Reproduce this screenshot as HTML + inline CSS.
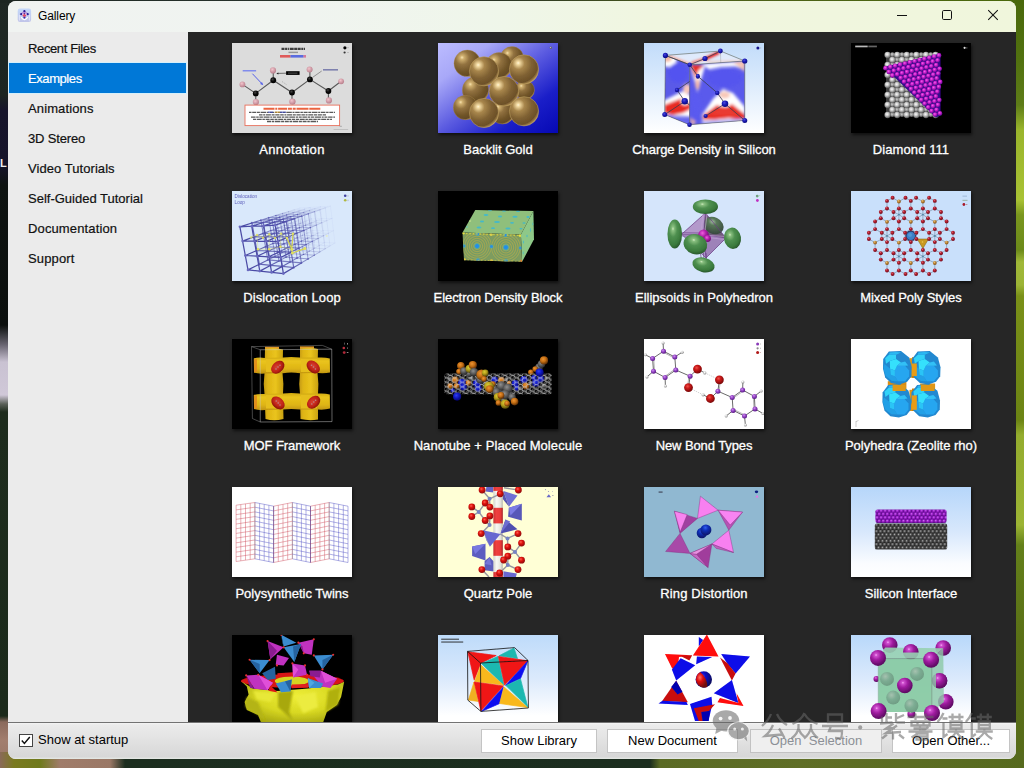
<!DOCTYPE html>
<html>
<head>
<meta charset="utf-8">
<title>Gallery</title>
<style>
*{box-sizing:border-box;margin:0;padding:0}
html,body{width:1024px;height:768px;overflow:hidden}
body{font-family:"Liberation Sans",sans-serif;position:relative;background:#1c2e1f}
.abs{position:absolute}
/* desktop pieces */
#dl{left:0;top:0;width:12px;height:768px;background:linear-gradient(180deg,#1f2824 0,#1c2521 95px,#17152b 110px,#16142a 165px,#0e1311 185px,#0b0f0d 325px,#6a6672 345px,#c9c2d2 362px,#d0c8d8 395px,#5a6058 404px,#1e2c1d 412px,#1b2a1b 716px,#8a6a5c 722px,#a27e6e 740px,#9a7868 758px,#7c7c22 762px,#74781e 768px)}
#dr{left:1010px;top:0;width:14px;height:768px;background:linear-gradient(180deg,#4a690b 0,#527210 60px,#5e7c18 105px,#9ab52c 130px,#a9c234 200px,#7a961e 215px,#6c8a1a 250px,#a0b838 262px,#9cb436 285px,#7a9018 296px,#6c8414 420px,#94ac2e 435px,#9cb434 525px,#64801a 545px,#5a7016 640px,#566a1a 768px)}
#db{left:0;top:752px;width:1024px;height:16px;background:linear-gradient(90deg,#8a6a58 0,#7a7a20 14px,#6f7a1c 40px,#a07c6a 60px,#9a7866 110px,#1c2e1f 125px,#1b2d1e 650px,#5a6a24 660px,#5f6e26 800px,#566a1e 1024px)}
#dt{left:0;top:0;width:1024px;height:3px;background:linear-gradient(90deg,#1d2622 0,#25302a 200px,#2a3424 500px,#4d5f1a 700px,#4a690b 1024px)}
/* window */
#win{left:8px;top:1px;width:1008px;height:758px;border-radius:8px;overflow:hidden;background:#ebebeb}
#tb{left:0;top:0;width:1008px;height:31px;background:linear-gradient(90deg,#f0f3f1 0,#f0f4f0 300px,#eff6ea 480px,#f0f6e0 640px,#f0f6dc 1008px)}
#ttl{left:30px;top:8px;font-size:12px;line-height:14px;color:#000}
#side{left:0;top:31px;width:179px;height:690px;background:#ebebeb}
#sel{left:1px;top:62px;width:177px;height:30px;background:#0078d7;box-shadow:0 0 0 1px rgba(205,240,255,.75)}
.si{left:20px;font-size:13px;line-height:16px;color:#111;white-space:nowrap;-webkit-text-stroke:.2px currentColor}
#main{left:180px;top:31px;width:828px;height:690px;background:#262626;overflow:hidden}
.th{width:120px;height:90px;box-shadow:1px 2px 3px rgba(0,0,0,.6);overflow:hidden}
.th svg{display:block}
.lb{width:206px;text-align:center;font-size:13px;line-height:16px;color:#fff;white-space:nowrap;-webkit-text-stroke:.3px #fff}
#bot{left:0;top:721px;width:1008px;height:37px;background:linear-gradient(180deg,#f4f4f4 0,#ebebeb 2px,#e6e6e6 30%,#d7d7d7 94%,#e6eae6 100%);border-top:1px solid #737373}
.btn{top:6px;height:24px;background:#fff;border:1px solid #c4c4c4;font-size:13px;line-height:22px;text-align:center;color:#000;white-space:nowrap}
</style>
</head>
<body>
<div id="dl" class="abs"></div>
<div id="dr" class="abs"></div>
<div id="dL" class="abs" style="left:0;top:158px;font-size:11px;font-weight:bold;line-height:11px;color:#eee">L</div>
<div id="db" class="abs"></div>
<div id="dt" class="abs"></div>
<div id="win" class="abs">
  <div id="tb" class="abs"></div>
  <svg class="abs" style="left:9px;top:7px" width="15" height="15" viewBox="0 0 15 15"><defs><filter id="icb"><feGaussianBlur stdDeviation=".45"/></filter><linearGradient id="icg" x1="0" y1="0" x2="0" y2="1"><stop offset="0" stop-color="#c4d8fa"/><stop offset="1" stop-color="#c0c4e8"/></linearGradient></defs><g filter="url(#icb)"><rect x=".7" y=".5" width="13.4" height="13.6" rx="2.4" fill="url(#icg)"/><path d="M7.4 2.2L11.2 5.6L7.4 9.4L3.6 5.6z" fill="#b890d8"/><path d="M3.6 9.6Q7.4 14.8 11.2 9.6L10.4 8.8Q7.4 12.6 4.4 8.8z" fill="#fff"/><path d="M2.4 7V12.6M12.4 7V12.6" stroke="#eef" stroke-width="1" opacity=".7"/><circle cx="7.4" cy="3.2" r="1.1" fill="#2a1c98"/><circle cx="4.2" cy="6.2" r="1.1" fill="#2a1c98"/><circle cx="10.7" cy="6.2" r="1.1" fill="#2a1c98"/><circle cx="7.4" cy="9.6" r="1.1" fill="#3a2ca8"/><circle cx="7.4" cy="7.2" r="1.6" fill="#e04868"/><circle cx="5.9" cy="6.2" r=".6" fill="#fff"/><circle cx="8.9" cy="6.2" r=".6" fill="#fff"/><circle cx="7.4" cy="5.6" r=".7" fill="#4a2ca0"/></g></svg>
  <div id="ttl" class="abs" style="top:8px;letter-spacing:-0.11px">Gallery</div>
  <svg class="abs" style="left:880px;top:0" width="128" height="31" viewBox="0 0 128 31"><g stroke="#111" stroke-width="1" fill="none"><path d="M9 14.5H19"/><rect x="54.5" y="9.5" width="9" height="9" rx="1.2"/><path d="M100.2 9.2L109.8 18.8M109.8 9.2L100.2 18.8" stroke-width="1.05"/></g></svg>
  <div id="side" class="abs"></div>
  <div id="sel" class="abs"></div>
  <div class="abs si" style="top:40px;letter-spacing:-0.37px">Recent Files</div>
  <div class="abs si" style="top:70px;color:#fff;letter-spacing:-0.42px">Examples</div>
  <div class="abs si" style="top:100px;letter-spacing:0.12px">Animations</div>
  <div class="abs si" style="top:130px;letter-spacing:-0.16px">3D Stereo</div>
  <div class="abs si" style="top:160px;letter-spacing:0.06px">Video Tutorials</div>
  <div class="abs si" style="top:190px">Self-Guided Tutorial</div>
  <div class="abs si" style="top:220px;letter-spacing:0.13px">Documentation</div>
  <div class="abs si" style="top:250px;letter-spacing:0.14px">Support</div>
  <div id="main" class="abs">
    <div class="abs th" style="left:44px;top:11px"><svg width="120" height="90" viewBox="0 0 120 90"><defs><radialGradient id="a1p" cx="40%" cy="35%" r="65%"><stop offset="0" stop-color="#f2c4cc"/><stop offset="1" stop-color="#b87f8c"/></radialGradient><radialGradient id="a1k" cx="40%" cy="35%" r="65%"><stop offset="0" stop-color="#444"/><stop offset=".5" stop-color="#0a0a0a"/><stop offset="1" stop-color="#000"/></radialGradient></defs><rect width="120" height="90" fill="#dcdcdc"/><g stroke="#5a5a5a" stroke-width="1.1" stroke-linecap="round" fill="none"><path d="M10.4 41.4L23.75 50.4L41.25 37.25L60 49.5L77.9 36.4L96.4 48L109.1 38.25"/><path d="M23.75 50.4V59M41.25 37.25V27.4M60 49.5V58.5M77.9 36.4V26.6M96.4 48V57.2"/></g><g fill="url(#a1p)"><circle cx="10.4" cy="41.4" r="2.9"/><circle cx="23.9" cy="59.1" r="3.1"/><circle cx="41" cy="27.4" r="3.1"/><circle cx="60.4" cy="58.6" r="3.2"/><circle cx="77.6" cy="26.6" r="3"/><circle cx="96.9" cy="57.4" r="3.1"/><circle cx="109.1" cy="38.3" r="2.9"/></g><g fill="url(#a1k)"><circle cx="23.75" cy="50.4" r="2.9"/><circle cx="41.25" cy="37.25" r="2.9"/><circle cx="60" cy="49.5" r="2.9"/><circle cx="77.9" cy="36.4" r="2.9"/><circle cx="96.4" cy="48" r="2.9"/></g><!-- title --><path d="M49.5 5.9H73" stroke="#222" stroke-width="2.3" stroke-dasharray="3 .6 2 .6 1.2 .8 4 .5 3 .5" opacity=".85"/><rect x="56.5" y="8.7" width="9.5" height="1.4" fill="#666" opacity=".6"/><rect x="48" y="12" width="10.5" height="2.6" fill="#e03a3a" opacity=".8"/><rect x="58.5" y="12" width="13" height="2.6" fill="#3a4fe0" opacity=".8"/><rect x="71.5" y="12" width="2.5" height="2.6" fill="#d05080" opacity=".7"/><!-- legend --><circle cx="112.9" cy="4.8" r="1.6" fill="#000"/><circle cx="112.6" cy="9.5" r="1.1" fill="#333"/><rect x="115" y="4.3" width="2" height=".8" fill="#999" opacity=".6"/><rect x="115" y="9.1" width="2" height=".8" fill="#999" opacity=".6"/><!-- black label + arrow --><rect x="54.1" y="28.2" width="13.5" height="3.7" fill="#000"/><rect x="56" y="29.6" width="9.5" height="1" fill="#777" opacity=".7"/><path d="M54 30.2L45.5 30.4" stroke="#222" stroke-width=".6"/><path d="M44.4 30.4l2-1v2z" fill="#222"/><!-- blue thick arrow --><rect x="10.7" y="27" width="13.4" height="1.5" fill="#6a78f0" opacity=".8"/><path d="M20.4 30.7L30 40.8" stroke="#5560e8" stroke-width="1"/><path d="M31.3 42.3l-3.2-1.4 1.9-1.8z" fill="#5560e8"/><!-- carbon atom --><rect x="91" y="26" width="15" height="1.6" fill="#555a9a" opacity=".7"/><path d="M89.7 28L80.6 34.4" stroke="#444" stroke-width=".5"/><!-- dotted --><path d="M50 38.5l5 3.5" stroke="#777" stroke-width=".5" stroke-dasharray="1 1.2"/><!-- box --><rect x="13" y="62.1" width="94.6" height="20.5" fill="#fff" stroke="#e8705c" stroke-width=".9"/><path d="M31.5 65.8H88.5" stroke="#e8481e" stroke-width="1.9" stroke-dasharray="11 .8 2 .8 9 .8 4 .8 3 .8 12 .8" opacity=".85"/><g stroke="#1a1a1a" stroke-width="1.25" opacity=".72" fill="none"><path d="M17 69.3H103" stroke-dasharray="2.5 .7 4 .7 3 .7 5.5 .7 2 .7 4.5 .7"/><path d="M27 71.8H94" stroke-dasharray="3.5 .7 2 .7 5 .7 3 .7 4.2 .7"/><path d="M19 74.1H103" stroke-dasharray="4.5 .7 2.5 .7 3.5 .7 6 .7 2 .7 3 .7"/><path d="M21 76.4H100" stroke-dasharray="3 .7 5 .7 2.5 .7 4 .7 3.5 .7"/><path d="M35 78.5H86" stroke-dasharray="4 .7 2.5 .7 5.5 .7 3 .7" stroke-width="1.4"/></g><rect x="36" y="68.6" width="5" height="1.2" fill="#2a3ad0" opacity=".6"/><rect x="43" y="68.6" width="5" height="1.2" fill="#e0a020" opacity=".7"/><rect x="48" y="68.6" width="6" height="1.2" fill="#2a3ad0" opacity=".6"/><rect x="101.6" y="86.2" width="14.5" height=".6" fill="#999" opacity=".7"/><rect x="107.5" y="82.8" width="2.4" height="1" fill="#888" opacity=".6"/></svg></div>
<div class="abs lb" style="left:1px;top:110px;letter-spacing:0.33px">Annotation</div>
<div class="abs th" style="left:250px;top:11px"><svg width="120" height="90" viewBox="0 0 120 90"><defs><linearGradient id="b2g" x1="0" y1="0" x2="1" y2="1"><stop offset="0" stop-color="#bcbcff"/><stop offset=".22" stop-color="#a8a8f8"/><stop offset=".5" stop-color="#5a5ae0"/><stop offset=".75" stop-color="#1a1ec8"/><stop offset="1" stop-color="#0608b4"/></linearGradient><radialGradient id="b2s" cx="34%" cy="32%" r="74%" fx="30%" fy="28%"><stop offset="0" stop-color="#fff6d8"/><stop offset=".07" stop-color="#f4dca4"/><stop offset=".28" stop-color="#a8864c"/><stop offset=".6" stop-color="#7e6032"/><stop offset=".86" stop-color="#6c5028"/><stop offset=".95" stop-color="#a08048"/><stop offset="1" stop-color="#c8a868"/></radialGradient><radialGradient id="b2d" cx="34%" cy="32%" r="74%" fx="30%" fy="28%"><stop offset="0" stop-color="#f8e4b0"/><stop offset=".1" stop-color="#d0b070"/><stop offset=".35" stop-color="#927240"/><stop offset=".7" stop-color="#705428"/><stop offset=".9" stop-color="#644a24"/><stop offset="1" stop-color="#b09050"/></radialGradient></defs><rect width="120" height="90" fill="url(#b2g)"/><filter id="b2f"><feGaussianBlur stdDeviation=".35"/></filter><g filter="url(#b2f)"><g fill="url(#b2d)" stroke="#b09050" stroke-width=".6" stroke-opacity=".6"><circle cx="74" cy="15" r="11.5"/><circle cx="29.3" cy="20.3" r="13.3"/><circle cx="61" cy="22.5" r="13"/><circle cx="87" cy="47" r="9.5"/><circle cx="37.5" cy="47" r="13.2"/><circle cx="27.5" cy="64.5" r="12.2"/><circle cx="64.5" cy="69" r="12"/></g><g fill="url(#b2s)" stroke="#c4a464" stroke-width=".7" stroke-opacity=".75"><circle cx="46" cy="28.3" r="14.6"/><circle cx="86" cy="26.4" r="14.6"/><circle cx="66" cy="48.3" r="14.8"/><circle cx="46" cy="70" r="14.6"/><circle cx="86" cy="68.3" r="14.6"/></g></g><circle cx="112.9" cy="4.8" r="1.3" fill="#667"/><circle cx="112.5" cy="4.4" r=".5" fill="#ccd"/></svg></div>
<div class="abs lb" style="left:207px;top:110px">Backlit Gold</div>
<div class="abs th" style="left:456px;top:11px"><svg width="120" height="90" viewBox="0 0 120 90"><defs><linearGradient id="c3g" x1="0" y1="0" x2="0" y2="1"><stop offset="0" stop-color="#c2dcfa"/><stop offset=".45" stop-color="#dcebfc"/><stop offset="1" stop-color="#fff"/></linearGradient><radialGradient id="c3a" cx="40%" cy="35%" r="65%"><stop offset="0" stop-color="#4a4ae0"/><stop offset=".5" stop-color="#1a1ab4"/><stop offset="1" stop-color="#0c0c80"/></radialGradient><filter id="c3b" x="-20%" y="-20%" width="140%" height="140%"><feGaussianBlur stdDeviation="1.6"/></filter><filter id="c3b2" x="-20%" y="-20%" width="140%" height="140%"><feGaussianBlur stdDeviation="1"/></filter><clipPath id="c3L"><path d="M20.4 12.4L44.75 21.75L44.5 81.75L19.75 71.6z"/></clipPath><clipPath id="c3R"><path d="M44.75 21.75L99.75 18L99.75 77.4L44.5 81.75z"/></clipPath><clipPath id="c3T"><path d="M20.4 12.4L75.4 8L99.75 18L44.75 21.75z"/></clipPath></defs><rect width="120" height="90" fill="url(#c3g)"/><g transform="translate(1 0)"><!-- top face --><g clip-path="url(#c3T)"><g filter="url(#c3b2)"><path d="M20 12L75 8L100 18L45 22z" fill="#e8eefc" opacity=".7"/><path d="M24 13.5L44 21" stroke="#f4b0a0" stroke-width="3"/><path d="M60 16L74 9.5" stroke="#e82020" stroke-width="4"/><path d="M46 20L60 15.5" stroke="#f08070" stroke-width="2.5"/><path d="M62 19L98 18" stroke="#f0d0c8" stroke-width="2"/></g></g><!-- left face --><g clip-path="url(#c3L)"><rect x="15" y="8" width="35" height="80" fill="#5a5ae8"/><g filter="url(#c3b)"><ellipse cx="23" cy="16" rx="9" ry="8" fill="#fff"/><ellipse cx="22" cy="15" rx="5" ry="4" fill="#f4b8a0"/><ellipse cx="33" cy="30" rx="10" ry="10" fill="#5252f0"/><path d="M18 58L38 48L48 54L48 74L18 72z" fill="#fff"/><path d="M19 62L40 54L46 60L46 66L38 70L28 72L19 70z" fill="#e82a20"/><ellipse cx="40" cy="58" rx="4" ry="4" fill="#fff"/><path d="M22 74L44 80" stroke="#6a6af0" stroke-width="5"/><ellipse cx="42" cy="46" rx="4" ry="5" fill="#f8c8b8"/></g></g><!-- right face --><g clip-path="url(#c3R)"><rect x="44" y="15" width="58" height="70" fill="#5a5aec"/><g filter="url(#c3b)"><path d="M57 21L100 18L100 27L90 23.5L76 24L64 26.5z" fill="#fff"/><path d="M88 19L100 18L100 29L94 24z" fill="#f6c4b4"/><path d="M45 22L52.5 49L60 23z" fill="#fff"/><path d="M45.5 22L51 36L53 28L59 22.5z" fill="#ea2c20"/><ellipse cx="52.5" cy="41" rx="2.2" ry="5.5" fill="#f6b8a8"/><ellipse cx="80" cy="35" rx="17" ry="9" fill="#5454ee"/><path d="M57 72L68 56L78 46L88 50L100 64L100 79L58 81z" fill="#fff"/><ellipse cx="79.5" cy="52" rx="5.5" ry="3.6" fill="#f8c8b8"/><path d="M58 72.5L72 62L80 65.5L87 61L100 71.5L100 77L84 75L70 76.5L58 76.5z" fill="#e8261e"/><path d="M62 72L80 62L98 74z" fill="#ea3a30"/><ellipse cx="80" cy="60.5" rx="3.6" ry="3.4" fill="#fff"/><path d="M45.5 52L50 80L56.5 62L53 50z" fill="#5a5af0"/><path d="M44 74L47.5 82.5L51 79z" fill="#f4b4a4"/><path d="M56 79.5L99 76.5" stroke="#9a9af6" stroke-width="2.2"/></g></g><!-- cube edges --><g stroke="#55584a" stroke-width=".55" fill="none"><path d="M20.4 12.4L75.4 8L99.75 18L44.75 21.75z"/><path d="M20.4 12.4L19.75 71.6L44.5 81.75L99.75 77.4L99.75 18"/><path d="M44.75 21.75L44.5 81.75"/><path d="M75.4 8L75.8 20" opacity=".4"/></g><g stroke="#3a3c50" stroke-width=".8" fill="none"><path d="M44.75 21.75L52.9 33.25L72.25 49.9L80 60.75L99.75 77.4M80 60.75L60.6 73"/><path d="M44.6 38.5L32 47L39.75 58.25L19.75 71.6M39.75 58.25L44.5 62"/><path d="M20.4 12.4L44.75 21.75L60 15.5L75.4 8"/></g><g fill="url(#c3a)"><circle cx="20.4" cy="12.4" r="2.6"/><circle cx="75.4" cy="8" r="2.4"/><circle cx="99.75" cy="18" r="2.6"/><circle cx="44.75" cy="21.75" r="2.3"/><circle cx="60" cy="15.5" r="2.6"/><ellipse cx="52.9" cy="33.25" rx="2" ry="2.6"/><circle cx="32" cy="47" r="2.2"/><circle cx="39.75" cy="58.25" r="3.2"/><circle cx="72.25" cy="49.9" r="2.2"/><circle cx="80" cy="60.75" r="3.3"/><circle cx="60.6" cy="73" r="2.1"/><circle cx="19.75" cy="71.6" r="2.5"/><circle cx="44.5" cy="81.75" r="2.3"/><circle cx="99.75" cy="77.4" r="2.5"/></g><circle cx="112.9" cy="4.9" r="1.5" fill="#14148c"/><rect x="115.6" y="4.2" width=".5" height="1.5" fill="#99a"/></g></svg></div>
<div class="abs lb" style="left:413px;top:110px;letter-spacing:-0.07px">Charge Density in Silicon</div>
<div class="abs th" style="left:663px;top:11px"><svg width="120" height="90" viewBox="0 0 120 90"><defs><radialGradient id="d4w" cx="42%" cy="38%" r="62%"><stop offset="0" stop-color="#fafafa"/><stop offset=".4" stop-color="#cacaca"/><stop offset="1" stop-color="#585858"/></radialGradient><radialGradient id="d4g" cx="42%" cy="38%" r="62%"><stop offset="0" stop-color="#ccc"/><stop offset=".5" stop-color="#999"/><stop offset="1" stop-color="#555"/></radialGradient><radialGradient id="d4m" cx="42%" cy="36%" r="64%"><stop offset="0" stop-color="#f468f0"/><stop offset=".45" stop-color="#c81cc8"/><stop offset="1" stop-color="#5c0890"/></radialGradient><filter id="d4b"><feGaussianBlur stdDeviation=".4"/></filter><clipPath id="d4c"><path d="M31 24.2L90.5 9.5L91 73L86 76.5L82 73z"/></clipPath></defs><rect width="120" height="90" fill="#000"/><g filter="url(#d4b)"><rect x="35" y="13" width="53" height="59" fill="#404040"/><circle cx="41.4" cy="71.7" r="2.4" fill="url(#d4g)"/><circle cx="51.0" cy="71.7" r="2.4" fill="url(#d4g)"/><circle cx="60.6" cy="71.7" r="2.4" fill="url(#d4g)"/><circle cx="70.2" cy="71.7" r="2.4" fill="url(#d4g)"/><circle cx="79.8" cy="71.7" r="2.4" fill="url(#d4g)"/><circle cx="46.2" cy="66.7" r="2.4" fill="url(#d4g)"/><circle cx="55.8" cy="66.7" r="2.4" fill="url(#d4g)"/><circle cx="65.4" cy="66.7" r="2.4" fill="url(#d4g)"/><circle cx="75.0" cy="66.7" r="2.4" fill="url(#d4g)"/><circle cx="84.6" cy="66.7" r="2.4" fill="url(#d4g)"/><circle cx="41.4" cy="61.7" r="2.4" fill="url(#d4g)"/><circle cx="51.0" cy="61.7" r="2.4" fill="url(#d4g)"/><circle cx="60.6" cy="61.7" r="2.4" fill="url(#d4g)"/><circle cx="70.2" cy="61.7" r="2.4" fill="url(#d4g)"/><circle cx="79.8" cy="61.7" r="2.4" fill="url(#d4g)"/><circle cx="46.2" cy="56.7" r="2.4" fill="url(#d4g)"/><circle cx="55.8" cy="56.7" r="2.4" fill="url(#d4g)"/><circle cx="65.4" cy="56.7" r="2.4" fill="url(#d4g)"/><circle cx="75.0" cy="56.7" r="2.4" fill="url(#d4g)"/><circle cx="84.6" cy="56.7" r="2.4" fill="url(#d4g)"/><circle cx="41.4" cy="51.7" r="2.4" fill="url(#d4g)"/><circle cx="51.0" cy="51.7" r="2.4" fill="url(#d4g)"/><circle cx="60.6" cy="51.7" r="2.4" fill="url(#d4g)"/><circle cx="70.2" cy="51.7" r="2.4" fill="url(#d4g)"/><circle cx="79.8" cy="51.7" r="2.4" fill="url(#d4g)"/><circle cx="46.2" cy="46.7" r="2.4" fill="url(#d4g)"/><circle cx="55.8" cy="46.7" r="2.4" fill="url(#d4g)"/><circle cx="65.4" cy="46.7" r="2.4" fill="url(#d4g)"/><circle cx="75.0" cy="46.7" r="2.4" fill="url(#d4g)"/><circle cx="84.6" cy="46.7" r="2.4" fill="url(#d4g)"/><circle cx="41.4" cy="41.7" r="2.4" fill="url(#d4g)"/><circle cx="51.0" cy="41.7" r="2.4" fill="url(#d4g)"/><circle cx="60.6" cy="41.7" r="2.4" fill="url(#d4g)"/><circle cx="70.2" cy="41.7" r="2.4" fill="url(#d4g)"/><circle cx="79.8" cy="41.7" r="2.4" fill="url(#d4g)"/><circle cx="46.2" cy="36.7" r="2.4" fill="url(#d4g)"/><circle cx="55.8" cy="36.7" r="2.4" fill="url(#d4g)"/><circle cx="65.4" cy="36.7" r="2.4" fill="url(#d4g)"/><circle cx="75.0" cy="36.7" r="2.4" fill="url(#d4g)"/><circle cx="84.6" cy="36.7" r="2.4" fill="url(#d4g)"/><circle cx="41.4" cy="31.7" r="2.4" fill="url(#d4g)"/><circle cx="51.0" cy="31.7" r="2.4" fill="url(#d4g)"/><circle cx="60.6" cy="31.7" r="2.4" fill="url(#d4g)"/><circle cx="70.2" cy="31.7" r="2.4" fill="url(#d4g)"/><circle cx="79.8" cy="31.7" r="2.4" fill="url(#d4g)"/><circle cx="46.2" cy="26.7" r="2.4" fill="url(#d4g)"/><circle cx="55.8" cy="26.7" r="2.4" fill="url(#d4g)"/><circle cx="65.4" cy="26.7" r="2.4" fill="url(#d4g)"/><circle cx="75.0" cy="26.7" r="2.4" fill="url(#d4g)"/><circle cx="84.6" cy="26.7" r="2.4" fill="url(#d4g)"/><circle cx="41.4" cy="21.7" r="2.4" fill="url(#d4g)"/><circle cx="51.0" cy="21.7" r="2.4" fill="url(#d4g)"/><circle cx="60.6" cy="21.7" r="2.4" fill="url(#d4g)"/><circle cx="70.2" cy="21.7" r="2.4" fill="url(#d4g)"/><circle cx="79.8" cy="21.7" r="2.4" fill="url(#d4g)"/><circle cx="46.2" cy="16.7" r="2.4" fill="url(#d4g)"/><circle cx="55.8" cy="16.7" r="2.4" fill="url(#d4g)"/><circle cx="65.4" cy="16.7" r="2.4" fill="url(#d4g)"/><circle cx="75.0" cy="16.7" r="2.4" fill="url(#d4g)"/><circle cx="84.6" cy="16.7" r="2.4" fill="url(#d4g)"/><circle cx="41.4" cy="11.7" r="2.4" fill="url(#d4g)"/><circle cx="51.0" cy="11.7" r="2.4" fill="url(#d4g)"/><circle cx="60.6" cy="11.7" r="2.4" fill="url(#d4g)"/><circle cx="70.2" cy="11.7" r="2.4" fill="url(#d4g)"/><circle cx="79.8" cy="11.7" r="2.4" fill="url(#d4g)"/><circle cx="36.6" cy="72.0" r="3.15" fill="url(#d4w)"/><circle cx="46.2" cy="72.0" r="3.15" fill="url(#d4w)"/><circle cx="55.8" cy="72.0" r="3.15" fill="url(#d4w)"/><circle cx="65.4" cy="72.0" r="3.15" fill="url(#d4w)"/><circle cx="75.0" cy="72.0" r="3.15" fill="url(#d4w)"/><circle cx="84.6" cy="72.0" r="3.15" fill="url(#d4w)"/><circle cx="41.4" cy="67.0" r="3.15" fill="url(#d4w)"/><circle cx="51.0" cy="67.0" r="3.15" fill="url(#d4w)"/><circle cx="60.6" cy="67.0" r="3.15" fill="url(#d4w)"/><circle cx="70.2" cy="67.0" r="3.15" fill="url(#d4w)"/><circle cx="79.8" cy="67.0" r="3.15" fill="url(#d4w)"/><circle cx="36.6" cy="62.0" r="3.15" fill="url(#d4w)"/><circle cx="46.2" cy="62.0" r="3.15" fill="url(#d4w)"/><circle cx="55.8" cy="62.0" r="3.15" fill="url(#d4w)"/><circle cx="65.4" cy="62.0" r="3.15" fill="url(#d4w)"/><circle cx="75.0" cy="62.0" r="3.15" fill="url(#d4w)"/><circle cx="84.6" cy="62.0" r="3.15" fill="url(#d4w)"/><circle cx="41.4" cy="57.0" r="3.15" fill="url(#d4w)"/><circle cx="51.0" cy="57.0" r="3.15" fill="url(#d4w)"/><circle cx="60.6" cy="57.0" r="3.15" fill="url(#d4w)"/><circle cx="70.2" cy="57.0" r="3.15" fill="url(#d4w)"/><circle cx="79.8" cy="57.0" r="3.15" fill="url(#d4w)"/><circle cx="36.6" cy="52.0" r="3.15" fill="url(#d4w)"/><circle cx="46.2" cy="52.0" r="3.15" fill="url(#d4w)"/><circle cx="55.8" cy="52.0" r="3.15" fill="url(#d4w)"/><circle cx="65.4" cy="52.0" r="3.15" fill="url(#d4w)"/><circle cx="75.0" cy="52.0" r="3.15" fill="url(#d4w)"/><circle cx="84.6" cy="52.0" r="3.15" fill="url(#d4w)"/><circle cx="41.4" cy="47.0" r="3.15" fill="url(#d4w)"/><circle cx="51.0" cy="47.0" r="3.15" fill="url(#d4w)"/><circle cx="60.6" cy="47.0" r="3.15" fill="url(#d4w)"/><circle cx="70.2" cy="47.0" r="3.15" fill="url(#d4w)"/><circle cx="79.8" cy="47.0" r="3.15" fill="url(#d4w)"/><circle cx="36.6" cy="42.0" r="3.15" fill="url(#d4w)"/><circle cx="46.2" cy="42.0" r="3.15" fill="url(#d4w)"/><circle cx="55.8" cy="42.0" r="3.15" fill="url(#d4w)"/><circle cx="65.4" cy="42.0" r="3.15" fill="url(#d4w)"/><circle cx="75.0" cy="42.0" r="3.15" fill="url(#d4w)"/><circle cx="84.6" cy="42.0" r="3.15" fill="url(#d4w)"/><circle cx="41.4" cy="37.0" r="3.15" fill="url(#d4w)"/><circle cx="51.0" cy="37.0" r="3.15" fill="url(#d4w)"/><circle cx="60.6" cy="37.0" r="3.15" fill="url(#d4w)"/><circle cx="70.2" cy="37.0" r="3.15" fill="url(#d4w)"/><circle cx="79.8" cy="37.0" r="3.15" fill="url(#d4w)"/><circle cx="36.6" cy="32.0" r="3.15" fill="url(#d4w)"/><circle cx="46.2" cy="32.0" r="3.15" fill="url(#d4w)"/><circle cx="55.8" cy="32.0" r="3.15" fill="url(#d4w)"/><circle cx="65.4" cy="32.0" r="3.15" fill="url(#d4w)"/><circle cx="75.0" cy="32.0" r="3.15" fill="url(#d4w)"/><circle cx="84.6" cy="32.0" r="3.15" fill="url(#d4w)"/><circle cx="41.4" cy="27.0" r="3.15" fill="url(#d4w)"/><circle cx="51.0" cy="27.0" r="3.15" fill="url(#d4w)"/><circle cx="60.6" cy="27.0" r="3.15" fill="url(#d4w)"/><circle cx="70.2" cy="27.0" r="3.15" fill="url(#d4w)"/><circle cx="79.8" cy="27.0" r="3.15" fill="url(#d4w)"/><circle cx="36.6" cy="22.0" r="3.15" fill="url(#d4w)"/><circle cx="46.2" cy="22.0" r="3.15" fill="url(#d4w)"/><circle cx="55.8" cy="22.0" r="3.15" fill="url(#d4w)"/><circle cx="65.4" cy="22.0" r="3.15" fill="url(#d4w)"/><circle cx="75.0" cy="22.0" r="3.15" fill="url(#d4w)"/><circle cx="84.6" cy="22.0" r="3.15" fill="url(#d4w)"/><circle cx="41.4" cy="17.0" r="3.15" fill="url(#d4w)"/><circle cx="51.0" cy="17.0" r="3.15" fill="url(#d4w)"/><circle cx="60.6" cy="17.0" r="3.15" fill="url(#d4w)"/><circle cx="70.2" cy="17.0" r="3.15" fill="url(#d4w)"/><circle cx="79.8" cy="17.0" r="3.15" fill="url(#d4w)"/><circle cx="36.6" cy="12.0" r="3.15" fill="url(#d4w)"/><circle cx="46.2" cy="12.0" r="3.15" fill="url(#d4w)"/><circle cx="55.8" cy="12.0" r="3.15" fill="url(#d4w)"/><circle cx="65.4" cy="12.0" r="3.15" fill="url(#d4w)"/><circle cx="75.0" cy="12.0" r="3.15" fill="url(#d4w)"/><circle cx="84.6" cy="12.0" r="3.15" fill="url(#d4w)"/><path d="M33 24L89.5 10.6L89.6 72.6L85 74.4z" fill="#340c8c"/><circle cx="34.5" cy="25.2" r="2.4" fill="url(#d4m)"/><circle cx="39.4" cy="24.0" r="2.4" fill="url(#d4m)"/><circle cx="44.2" cy="22.9" r="2.4" fill="url(#d4m)"/><circle cx="49.1" cy="21.7" r="2.4" fill="url(#d4m)"/><circle cx="54.0" cy="20.6" r="2.4" fill="url(#d4m)"/><circle cx="58.8" cy="19.4" r="2.4" fill="url(#d4m)"/><circle cx="63.7" cy="18.3" r="2.4" fill="url(#d4m)"/><circle cx="68.6" cy="17.1" r="2.4" fill="url(#d4m)"/><circle cx="73.4" cy="16.0" r="2.4" fill="url(#d4m)"/><circle cx="78.3" cy="14.8" r="2.4" fill="url(#d4m)"/><circle cx="83.2" cy="13.6" r="2.4" fill="url(#d4m)"/><circle cx="88.0" cy="12.5" r="2.4" fill="url(#d4m)"/><circle cx="37.9" cy="28.9" r="2.4" fill="url(#d4m)"/><circle cx="42.8" cy="27.7" r="2.4" fill="url(#d4m)"/><circle cx="47.7" cy="26.5" r="2.4" fill="url(#d4m)"/><circle cx="52.5" cy="25.4" r="2.4" fill="url(#d4m)"/><circle cx="57.4" cy="24.2" r="2.4" fill="url(#d4m)"/><circle cx="62.3" cy="23.1" r="2.4" fill="url(#d4m)"/><circle cx="67.1" cy="21.9" r="2.4" fill="url(#d4m)"/><circle cx="72.0" cy="20.8" r="2.4" fill="url(#d4m)"/><circle cx="76.9" cy="19.6" r="2.4" fill="url(#d4m)"/><circle cx="81.7" cy="18.5" r="2.4" fill="url(#d4m)"/><circle cx="86.6" cy="17.3" r="2.4" fill="url(#d4m)"/><circle cx="41.4" cy="32.5" r="2.4" fill="url(#d4m)"/><circle cx="46.2" cy="31.4" r="2.4" fill="url(#d4m)"/><circle cx="51.1" cy="30.2" r="2.4" fill="url(#d4m)"/><circle cx="56.0" cy="29.0" r="2.4" fill="url(#d4m)"/><circle cx="60.8" cy="27.9" r="2.4" fill="url(#d4m)"/><circle cx="65.7" cy="26.7" r="2.4" fill="url(#d4m)"/><circle cx="70.6" cy="25.6" r="2.4" fill="url(#d4m)"/><circle cx="75.4" cy="24.4" r="2.4" fill="url(#d4m)"/><circle cx="80.3" cy="23.3" r="2.4" fill="url(#d4m)"/><circle cx="85.2" cy="22.1" r="2.4" fill="url(#d4m)"/><circle cx="49.7" cy="35.0" r="2.4" fill="url(#d4m)"/><circle cx="54.5" cy="33.9" r="2.4" fill="url(#d4m)"/><circle cx="59.4" cy="32.7" r="2.4" fill="url(#d4m)"/><circle cx="64.3" cy="31.5" r="2.4" fill="url(#d4m)"/><circle cx="69.1" cy="30.4" r="2.4" fill="url(#d4m)"/><circle cx="74.0" cy="29.2" r="2.4" fill="url(#d4m)"/><circle cx="78.9" cy="28.1" r="2.4" fill="url(#d4m)"/><circle cx="83.7" cy="26.9" r="2.4" fill="url(#d4m)"/><circle cx="88.6" cy="25.8" r="2.4" fill="url(#d4m)"/><circle cx="53.1" cy="38.7" r="2.4" fill="url(#d4m)"/><circle cx="58.0" cy="37.5" r="2.4" fill="url(#d4m)"/><circle cx="62.8" cy="36.4" r="2.4" fill="url(#d4m)"/><circle cx="67.7" cy="35.2" r="2.4" fill="url(#d4m)"/><circle cx="72.6" cy="34.0" r="2.4" fill="url(#d4m)"/><circle cx="77.4" cy="32.9" r="2.4" fill="url(#d4m)"/><circle cx="82.3" cy="31.7" r="2.4" fill="url(#d4m)"/><circle cx="87.2" cy="30.6" r="2.4" fill="url(#d4m)"/><circle cx="56.6" cy="42.3" r="2.4" fill="url(#d4m)"/><circle cx="61.4" cy="41.2" r="2.4" fill="url(#d4m)"/><circle cx="66.3" cy="40.0" r="2.4" fill="url(#d4m)"/><circle cx="71.1" cy="38.9" r="2.4" fill="url(#d4m)"/><circle cx="76.0" cy="37.7" r="2.4" fill="url(#d4m)"/><circle cx="80.9" cy="36.5" r="2.4" fill="url(#d4m)"/><circle cx="85.7" cy="35.4" r="2.4" fill="url(#d4m)"/><circle cx="60.0" cy="46.0" r="2.4" fill="url(#d4m)"/><circle cx="64.9" cy="44.8" r="2.4" fill="url(#d4m)"/><circle cx="69.7" cy="43.7" r="2.4" fill="url(#d4m)"/><circle cx="74.6" cy="42.5" r="2.4" fill="url(#d4m)"/><circle cx="79.4" cy="41.4" r="2.4" fill="url(#d4m)"/><circle cx="84.3" cy="40.2" r="2.4" fill="url(#d4m)"/><circle cx="89.2" cy="39.0" r="2.4" fill="url(#d4m)"/><circle cx="63.4" cy="49.6" r="2.4" fill="url(#d4m)"/><circle cx="68.3" cy="48.5" r="2.4" fill="url(#d4m)"/><circle cx="73.2" cy="47.3" r="2.4" fill="url(#d4m)"/><circle cx="78.0" cy="46.2" r="2.4" fill="url(#d4m)"/><circle cx="82.9" cy="45.0" r="2.4" fill="url(#d4m)"/><circle cx="87.8" cy="43.9" r="2.4" fill="url(#d4m)"/><circle cx="66.9" cy="53.3" r="2.4" fill="url(#d4m)"/><circle cx="71.7" cy="52.1" r="2.4" fill="url(#d4m)"/><circle cx="76.6" cy="51.0" r="2.4" fill="url(#d4m)"/><circle cx="81.5" cy="49.8" r="2.4" fill="url(#d4m)"/><circle cx="86.3" cy="48.7" r="2.4" fill="url(#d4m)"/><circle cx="70.3" cy="56.9" r="2.4" fill="url(#d4m)"/><circle cx="75.2" cy="55.8" r="2.4" fill="url(#d4m)"/><circle cx="80.0" cy="54.6" r="2.4" fill="url(#d4m)"/><circle cx="84.9" cy="53.5" r="2.4" fill="url(#d4m)"/><circle cx="73.7" cy="60.6" r="2.4" fill="url(#d4m)"/><circle cx="78.6" cy="59.4" r="2.4" fill="url(#d4m)"/><circle cx="83.5" cy="58.3" r="2.4" fill="url(#d4m)"/><circle cx="88.3" cy="57.1" r="2.4" fill="url(#d4m)"/><circle cx="77.2" cy="64.3" r="2.4" fill="url(#d4m)"/><circle cx="82.0" cy="63.1" r="2.4" fill="url(#d4m)"/><circle cx="86.9" cy="61.9" r="2.4" fill="url(#d4m)"/><circle cx="80.6" cy="67.9" r="2.4" fill="url(#d4m)"/><circle cx="85.5" cy="66.8" r="2.4" fill="url(#d4m)"/><circle cx="84.1" cy="71.6" r="2.4" fill="url(#d4m)"/><circle cx="88.9" cy="70.4" r="2.4" fill="url(#d4m)"/></g><rect x="4.2" y="2.6" width="12.5" height="1.7" fill="#e8e8e8" opacity=".8"/><rect x="17.3" y="2.6" width="8.6" height="1.7" fill="#aaa" opacity=".6"/><circle cx="113.6" cy="4.8" r="1.1" fill="#ddd"/><rect x="115.6" y="4.1" width=".6" height="1.5" fill="#999"/></svg></div>
<div class="abs lb" style="left:620px;top:110px;letter-spacing:0.09px">Diamond 111</div>
<div class="abs th" style="left:44px;top:159px"><svg width="120" height="90" viewBox="0 0 120 90"><defs><filter id="e5b"><feGaussianBlur stdDeviation=".3"/></filter></defs><rect width="120" height="90" fill="#d9e8fb"/><g filter="url(#e5b)" stroke-linecap="round"><path d="M67.9 17.0L78.1 16.4M67.9 17.0L69.4 28.2M78.1 16.4L88.3 15.8M78.1 16.4L79.6 27.9M88.3 15.8L98.5 15.1M88.3 15.8L89.8 27.7M98.5 15.1L100.0 27.4M69.4 28.2L79.6 27.9M69.4 28.2L71.0 39.3M79.6 27.9L89.8 27.7M79.6 27.9L81.1 39.5M89.8 27.7L100.0 27.4M89.8 27.7L91.3 39.6M100.0 27.4L101.4 39.7M71.0 39.3L81.1 39.5M71.0 39.3L72.5 50.5M81.1 39.5L91.3 39.6M81.1 39.5L82.6 51.0M91.3 39.6L101.4 39.7M91.3 39.6L92.8 51.5M101.4 39.7L102.9 52.0M72.5 50.5L82.6 51.0M82.6 51.0L92.8 51.5M92.8 51.5L102.9 52.0" stroke="#4c4ca6" stroke-width="0.50" fill="none" opacity="0.06"/><path d="M62.2 18.8L72.5 18.2M62.2 18.8L63.8 30.3M62.2 18.8L67.9 17.0M72.5 18.2L82.9 17.6M72.5 18.2L74.2 30.0M72.5 18.2L78.1 16.4M82.9 17.6L93.3 16.9M82.9 17.6L84.5 29.8M82.9 17.6L88.3 15.8M93.3 16.9L94.8 29.6M93.3 16.9L98.5 15.1M63.8 30.3L74.2 30.0M63.8 30.3L65.5 41.7M63.8 30.3L69.4 28.2M74.2 30.0L84.5 29.8M74.2 30.0L75.8 41.9M74.2 30.0L79.6 27.9M84.5 29.8L94.8 29.6M84.5 29.8L86.1 42.1M84.5 29.8L89.8 27.7M94.8 29.6L96.4 42.3M94.8 29.6L100.0 27.4M65.5 41.7L75.8 41.9M65.5 41.7L67.1 53.2M65.5 41.7L71.0 39.3M75.8 41.9L86.1 42.1M75.8 41.9L77.4 53.8M75.8 41.9L81.1 39.5M86.1 42.1L96.4 42.3M86.1 42.1L87.7 54.3M86.1 42.1L91.3 39.6M96.4 42.3L98.0 54.9M96.4 42.3L101.4 39.7M67.1 53.2L77.4 53.8M67.1 53.2L72.5 50.5M77.4 53.8L87.7 54.3M77.4 53.8L82.6 51.0M87.7 54.3L98.0 54.9M87.7 54.3L92.8 51.5M98.0 54.9L102.9 52.0" stroke="#4c4ca6" stroke-width="0.59" fill="none" opacity="0.08"/><path d="M56.5 20.6L67.0 20.0M56.5 20.6L58.2 32.3M56.5 20.6L62.2 18.8M67.0 20.0L77.5 19.4M67.0 20.0L68.7 32.2M67.0 20.0L72.5 18.2M77.5 19.4L88.0 18.8M77.5 19.4L79.2 32.0M77.5 19.4L82.9 17.6M88.0 18.8L89.7 31.8M88.0 18.8L93.3 16.9M58.2 32.3L68.7 32.2M58.2 32.3L60.0 44.1M58.2 32.3L63.8 30.3M68.7 32.2L79.2 32.0M68.7 32.2L70.5 44.3M68.7 32.2L74.2 30.0M79.2 32.0L89.7 31.8M79.2 32.0L80.9 44.6M79.2 32.0L84.5 29.8M89.7 31.8L91.4 44.8M89.7 31.8L94.8 29.6M60.0 44.1L70.5 44.3M60.0 44.1L61.8 55.9M60.0 44.1L65.5 41.7M70.5 44.3L80.9 44.6M70.5 44.3L72.2 56.5M70.5 44.3L75.8 41.9M80.9 44.6L91.4 44.8M80.9 44.6L82.6 57.2M80.9 44.6L86.1 42.1M91.4 44.8L93.1 57.8M91.4 44.8L96.4 42.3M61.8 55.9L72.2 56.5M61.8 55.9L67.1 53.2M72.2 56.5L82.6 57.2M72.2 56.5L77.4 53.8M82.6 57.2L93.1 57.8M82.6 57.2L87.7 54.3M93.1 57.8L98.0 54.9" stroke="#4c4ca6" stroke-width="0.69" fill="none" opacity="0.17"/><path d="M50.5 22.4L61.1 21.8M50.5 22.4L52.4 34.5M50.5 22.4L56.5 20.6M61.1 21.8L71.8 21.3M61.1 21.8L63.0 34.4M61.1 21.8L67.0 20.0M71.8 21.3L82.5 20.7M71.8 21.3L73.6 34.2M71.8 21.3L77.5 19.4M82.5 20.7L84.3 34.1M82.5 20.7L88.0 18.8M52.4 34.5L63.0 34.4M52.4 34.5L54.2 46.6M52.4 34.5L58.2 32.3M63.0 34.4L73.6 34.2M63.0 34.4L64.9 46.9M63.0 34.4L68.7 32.2M73.6 34.2L84.3 34.1M73.6 34.2L75.5 47.2M73.6 34.2L79.2 32.0M84.3 34.1L86.1 47.5M84.3 34.1L89.7 31.8M54.2 46.6L64.9 46.9M54.2 46.6L56.1 58.7M54.2 46.6L60.0 44.1M64.9 46.9L75.5 47.2M64.9 46.9L66.7 59.4M64.9 46.9L70.5 44.3M75.5 47.2L86.1 47.5M75.5 47.2L77.3 60.2M75.5 47.2L80.9 44.6M86.1 47.5L87.9 60.9M86.1 47.5L91.4 44.8M56.1 58.7L66.7 59.4M56.1 58.7L61.8 55.9M66.7 59.4L77.3 60.2M66.7 59.4L72.2 56.5M77.3 60.2L87.9 60.9M77.3 60.2L82.6 57.2M87.9 60.9L93.1 57.8" stroke="#4c4ca6" stroke-width="0.78" fill="none" opacity="0.27"/><path d="M43.9 24.5L54.7 23.9M43.9 24.5L45.9 37.0M43.9 24.5L50.5 22.4M54.7 23.9L65.6 23.4M54.7 23.9L56.7 36.8M54.7 23.9L61.1 21.8M65.6 23.4L76.4 22.8M65.6 23.4L67.5 36.7M65.6 23.4L71.8 21.3M76.4 22.8L78.4 36.6M76.4 22.8L82.5 20.7M45.9 37.0L56.7 36.8M45.9 37.0L47.9 49.4M45.9 37.0L52.4 34.5M56.7 36.8L67.5 36.7M56.7 36.8L58.7 49.7M56.7 36.8L63.0 34.4M67.5 36.7L78.4 36.6M67.5 36.7L69.5 50.1M67.5 36.7L73.6 34.2M78.4 36.6L80.3 50.4M78.4 36.6L84.3 34.1M47.9 49.4L58.7 49.7M47.9 49.4L49.9 61.8M47.9 49.4L54.2 46.6M58.7 49.7L69.5 50.1M58.7 49.7L60.7 62.7M58.7 49.7L64.9 46.9M69.5 50.1L80.3 50.4M69.5 50.1L71.5 63.5M69.5 50.1L75.5 47.2M80.3 50.4L82.3 64.2M80.3 50.4L86.1 47.5M49.9 61.8L60.7 62.7M49.9 61.8L56.1 58.7M60.7 62.7L71.5 63.5M60.7 62.7L66.7 59.4M71.5 63.5L82.3 64.2M71.5 63.5L77.3 60.2M82.3 64.2L87.9 60.9" stroke="#4c4ca6" stroke-width="0.88" fill="none" opacity="0.39"/><circle cx="43.9" cy="24.5" r="0.82" fill="#6a6ac0" opacity="0.39"/><circle cx="54.7" cy="23.9" r="0.82" fill="#6a6ac0" opacity="0.39"/><circle cx="65.6" cy="23.4" r="0.82" fill="#6a6ac0" opacity="0.39"/><circle cx="76.4" cy="22.8" r="0.82" fill="#6a6ac0" opacity="0.39"/><circle cx="45.9" cy="37.0" r="0.82" fill="#6a6ac0" opacity="0.39"/><circle cx="56.7" cy="36.8" r="0.82" fill="#6a6ac0" opacity="0.39"/><circle cx="67.5" cy="36.7" r="0.82" fill="#6a6ac0" opacity="0.39"/><circle cx="78.4" cy="36.6" r="0.82" fill="#6a6ac0" opacity="0.39"/><circle cx="47.9" cy="49.4" r="0.82" fill="#6a6ac0" opacity="0.39"/><circle cx="58.7" cy="49.7" r="0.82" fill="#6a6ac0" opacity="0.39"/><circle cx="69.5" cy="50.1" r="0.82" fill="#6a6ac0" opacity="0.39"/><circle cx="80.3" cy="50.4" r="0.82" fill="#6a6ac0" opacity="0.39"/><circle cx="49.9" cy="61.8" r="0.82" fill="#6a6ac0" opacity="0.39"/><circle cx="60.7" cy="62.7" r="0.82" fill="#6a6ac0" opacity="0.39"/><circle cx="71.5" cy="63.5" r="0.82" fill="#6a6ac0" opacity="0.39"/><circle cx="82.3" cy="64.2" r="0.82" fill="#6a6ac0" opacity="0.39"/><path d="M36.7 26.8L47.7 26.2M36.7 26.8L38.8 39.6M36.7 26.8L43.9 24.5M47.7 26.2L58.7 25.6M47.7 26.2L49.8 39.5M47.7 26.2L54.7 23.9M58.7 25.6L69.8 25.1M58.7 25.6L60.9 39.4M58.7 25.6L65.6 23.4M69.8 25.1L71.9 39.4M69.8 25.1L76.4 22.8M38.8 39.6L49.8 39.5M38.8 39.6L41.0 52.4M38.8 39.6L45.9 37.0M49.8 39.5L60.9 39.4M49.8 39.5L52.0 52.8M49.8 39.5L56.7 36.8M60.9 39.4L71.9 39.4M60.9 39.4L63.0 53.2M60.9 39.4L67.5 36.7M71.9 39.4L74.0 53.6M71.9 39.4L78.4 36.6M41.0 52.4L52.0 52.8M41.0 52.4L43.1 65.3M41.0 52.4L47.9 49.4M52.0 52.8L63.0 53.2M52.0 52.8L54.1 66.1M52.0 52.8L58.7 49.7M63.0 53.2L74.0 53.6M63.0 53.2L65.1 67.0M63.0 53.2L69.5 50.1M74.0 53.6L76.1 67.9M74.0 53.6L80.3 50.4M43.1 65.3L54.1 66.1M43.1 65.3L49.9 61.8M54.1 66.1L65.1 67.0M54.1 66.1L60.7 62.7M65.1 67.0L76.1 67.9M65.1 67.0L71.5 63.5M76.1 67.9L82.3 64.2" stroke="#4c4ca6" stroke-width="0.97" fill="none" opacity="0.53"/><circle cx="36.7" cy="26.8" r="0.94" fill="#6a6ac0" opacity="0.53"/><circle cx="47.7" cy="26.2" r="0.94" fill="#6a6ac0" opacity="0.53"/><circle cx="58.7" cy="25.6" r="0.94" fill="#6a6ac0" opacity="0.53"/><circle cx="69.8" cy="25.1" r="0.94" fill="#6a6ac0" opacity="0.53"/><circle cx="38.8" cy="39.6" r="0.94" fill="#6a6ac0" opacity="0.53"/><circle cx="49.8" cy="39.5" r="0.94" fill="#6a6ac0" opacity="0.53"/><circle cx="60.9" cy="39.4" r="0.94" fill="#6a6ac0" opacity="0.53"/><circle cx="71.9" cy="39.4" r="0.94" fill="#6a6ac0" opacity="0.53"/><circle cx="41.0" cy="52.4" r="0.94" fill="#6a6ac0" opacity="0.53"/><circle cx="52.0" cy="52.8" r="0.94" fill="#6a6ac0" opacity="0.53"/><circle cx="63.0" cy="53.2" r="0.94" fill="#6a6ac0" opacity="0.53"/><circle cx="74.0" cy="53.6" r="0.94" fill="#6a6ac0" opacity="0.53"/><circle cx="43.1" cy="65.3" r="0.94" fill="#6a6ac0" opacity="0.53"/><circle cx="54.1" cy="66.1" r="0.94" fill="#6a6ac0" opacity="0.53"/><circle cx="65.1" cy="67.0" r="0.94" fill="#6a6ac0" opacity="0.53"/><circle cx="76.1" cy="67.9" r="0.94" fill="#6a6ac0" opacity="0.53"/><path d="M28.9 29.2L40.1 28.6M28.9 29.2L31.2 42.4M28.9 29.2L36.7 26.8M40.1 28.6L51.3 28.1M40.1 28.6L42.4 42.4M40.1 28.6L47.7 26.2M51.3 28.1L62.6 27.6M51.3 28.1L53.6 42.4M51.3 28.1L58.7 25.6M62.6 27.6L64.9 42.3M62.6 27.6L69.8 25.1M31.2 42.4L42.4 42.4M31.2 42.4L33.5 55.7M31.2 42.4L38.8 39.6M42.4 42.4L53.6 42.4M42.4 42.4L44.7 56.2M42.4 42.4L49.8 39.5M53.6 42.4L64.9 42.3M53.6 42.4L55.9 56.6M53.6 42.4L60.9 39.4M64.9 42.3L67.1 57.1M64.9 42.3L71.9 39.4M33.5 55.7L44.7 56.2M33.5 55.7L35.8 68.9M33.5 55.7L41.0 52.4M44.7 56.2L55.9 56.6M44.7 56.2L47.0 69.9M44.7 56.2L52.0 52.8M55.9 56.6L67.1 57.1M55.9 56.6L58.2 70.9M55.9 56.6L63.0 53.2M67.1 57.1L69.4 71.9M67.1 57.1L74.0 53.6M35.8 68.9L47.0 69.9M35.8 68.9L43.1 65.3M47.0 69.9L58.2 70.9M47.0 69.9L54.1 66.1M58.2 70.9L69.4 71.9M58.2 70.9L65.1 67.0M69.4 71.9L76.1 67.9" stroke="#4c4ca6" stroke-width="1.06" fill="none" opacity="0.67"/><circle cx="28.9" cy="29.2" r="1.06" fill="#6a6ac0" opacity="0.67"/><circle cx="40.1" cy="28.6" r="1.06" fill="#6a6ac0" opacity="0.67"/><circle cx="51.3" cy="28.1" r="1.06" fill="#6a6ac0" opacity="0.67"/><circle cx="62.6" cy="27.6" r="1.06" fill="#6a6ac0" opacity="0.67"/><circle cx="31.2" cy="42.4" r="1.06" fill="#6a6ac0" opacity="0.67"/><circle cx="42.4" cy="42.4" r="1.06" fill="#6a6ac0" opacity="0.67"/><circle cx="53.6" cy="42.4" r="1.06" fill="#6a6ac0" opacity="0.67"/><circle cx="64.9" cy="42.3" r="1.06" fill="#6a6ac0" opacity="0.67"/><circle cx="33.5" cy="55.7" r="1.06" fill="#6a6ac0" opacity="0.67"/><circle cx="44.7" cy="56.2" r="1.06" fill="#6a6ac0" opacity="0.67"/><circle cx="55.9" cy="56.6" r="1.06" fill="#6a6ac0" opacity="0.67"/><circle cx="67.1" cy="57.1" r="1.06" fill="#6a6ac0" opacity="0.67"/><circle cx="35.8" cy="68.9" r="1.06" fill="#6a6ac0" opacity="0.67"/><circle cx="47.0" cy="69.9" r="1.06" fill="#6a6ac0" opacity="0.67"/><circle cx="58.2" cy="70.9" r="1.06" fill="#6a6ac0" opacity="0.67"/><circle cx="69.4" cy="71.9" r="1.06" fill="#6a6ac0" opacity="0.67"/><path d="M19.9 32.0L31.3 31.5M19.9 32.0L22.4 45.7M19.9 32.0L28.9 29.2M31.3 31.5L42.8 31.0M31.3 31.5L33.8 45.8M31.3 31.5L40.1 28.6M42.8 31.0L54.3 30.4M42.8 31.0L45.3 45.8M42.8 31.0L51.3 28.1M54.3 30.4L56.8 45.8M54.3 30.4L62.6 27.6M22.4 45.7L33.8 45.8M22.4 45.7L24.8 59.5M22.4 45.7L31.2 42.4M33.8 45.8L45.3 45.8M33.8 45.8L36.3 60.0M33.8 45.8L42.4 42.4M45.3 45.8L56.8 45.8M45.3 45.8L47.8 60.6M45.3 45.8L53.6 42.4M56.8 45.8L59.2 61.1M56.8 45.8L64.9 42.3M24.8 59.5L36.3 60.0M24.8 59.5L27.3 73.2M24.8 59.5L33.5 55.7M36.3 60.0L47.8 60.6M36.3 60.0L38.8 74.3M36.3 60.0L44.7 56.2M47.8 60.6L59.2 61.1M47.8 60.6L50.2 75.4M47.8 60.6L55.9 56.6M59.2 61.1L61.7 76.5M59.2 61.1L67.1 57.1M27.3 73.2L38.8 74.3M27.3 73.2L35.8 68.9M38.8 74.3L50.2 75.4M38.8 74.3L47.0 69.9M50.2 75.4L61.7 76.5M50.2 75.4L58.2 70.9M61.7 76.5L69.4 71.9" stroke="#4c4ca6" stroke-width="1.16" fill="none" opacity="0.83"/><circle cx="19.9" cy="32.0" r="1.18" fill="#6a6ac0" opacity="0.83"/><circle cx="31.3" cy="31.5" r="1.18" fill="#6a6ac0" opacity="0.83"/><circle cx="42.8" cy="31.0" r="1.18" fill="#6a6ac0" opacity="0.83"/><circle cx="54.3" cy="30.4" r="1.18" fill="#6a6ac0" opacity="0.83"/><circle cx="22.4" cy="45.7" r="1.18" fill="#6a6ac0" opacity="0.83"/><circle cx="33.8" cy="45.8" r="1.18" fill="#6a6ac0" opacity="0.83"/><circle cx="45.3" cy="45.8" r="1.18" fill="#6a6ac0" opacity="0.83"/><circle cx="56.8" cy="45.8" r="1.18" fill="#6a6ac0" opacity="0.83"/><circle cx="24.8" cy="59.5" r="1.18" fill="#6a6ac0" opacity="0.83"/><circle cx="36.3" cy="60.0" r="1.18" fill="#6a6ac0" opacity="0.83"/><circle cx="47.8" cy="60.6" r="1.18" fill="#6a6ac0" opacity="0.83"/><circle cx="59.2" cy="61.1" r="1.18" fill="#6a6ac0" opacity="0.83"/><circle cx="27.3" cy="73.2" r="1.18" fill="#6a6ac0" opacity="0.83"/><circle cx="38.8" cy="74.3" r="1.18" fill="#6a6ac0" opacity="0.83"/><circle cx="50.2" cy="75.4" r="1.18" fill="#6a6ac0" opacity="0.83"/><circle cx="61.7" cy="76.5" r="1.18" fill="#6a6ac0" opacity="0.83"/><path d="M7.9 35.8L19.7 35.2M7.9 35.8L10.6 50.1M7.9 35.8L19.9 32.0M19.7 35.2L31.5 34.8M19.7 35.2L22.4 50.2M19.7 35.2L31.3 31.5M31.5 34.8L43.2 34.2M31.5 34.8L34.2 50.3M31.5 34.8L42.8 31.0M43.2 34.2L45.9 50.4M43.2 34.2L54.3 30.4M10.6 50.1L22.4 50.2M10.6 50.1L13.3 64.5M10.6 50.1L22.4 45.7M22.4 50.2L34.2 50.3M22.4 50.2L25.1 65.2M22.4 50.2L33.8 45.8M34.2 50.3L45.9 50.4M34.2 50.3L36.9 65.8M34.2 50.3L45.3 45.8M45.9 50.4L48.7 66.5M45.9 50.4L56.8 45.8M13.3 64.5L25.1 65.2M13.3 64.5L16.0 78.9M13.3 64.5L24.8 59.5M25.1 65.2L36.9 65.8M25.1 65.2L27.8 80.1M25.1 65.2L36.3 60.0M36.9 65.8L48.7 66.5M36.9 65.8L39.6 81.4M36.9 65.8L47.8 60.6M48.7 66.5L51.4 82.6M48.7 66.5L59.2 61.1M16.0 78.9L27.8 80.1M16.0 78.9L27.3 73.2M27.8 80.1L39.6 81.4M27.8 80.1L38.8 74.3M39.6 81.4L51.4 82.6M39.6 81.4L50.2 75.4M51.4 82.6L61.7 76.5" stroke="#4c4ca6" stroke-width="1.25" fill="none" opacity="1.00"/><circle cx="7.9" cy="35.8" r="1.30" fill="#6a6ac0" opacity="1.00"/><circle cx="19.7" cy="35.2" r="1.30" fill="#6a6ac0" opacity="1.00"/><circle cx="31.5" cy="34.8" r="1.30" fill="#6a6ac0" opacity="1.00"/><circle cx="43.2" cy="34.2" r="1.30" fill="#6a6ac0" opacity="1.00"/><circle cx="10.6" cy="50.1" r="1.30" fill="#6a6ac0" opacity="1.00"/><circle cx="22.4" cy="50.2" r="1.30" fill="#6a6ac0" opacity="1.00"/><circle cx="34.2" cy="50.3" r="1.30" fill="#6a6ac0" opacity="1.00"/><circle cx="45.9" cy="50.4" r="1.30" fill="#6a6ac0" opacity="1.00"/><circle cx="13.3" cy="64.5" r="1.30" fill="#6a6ac0" opacity="1.00"/><circle cx="25.1" cy="65.2" r="1.30" fill="#6a6ac0" opacity="1.00"/><circle cx="36.9" cy="65.8" r="1.30" fill="#6a6ac0" opacity="1.00"/><circle cx="48.7" cy="66.5" r="1.30" fill="#6a6ac0" opacity="1.00"/><circle cx="16.0" cy="78.9" r="1.30" fill="#6a6ac0" opacity="1.00"/><circle cx="27.8" cy="80.1" r="1.30" fill="#6a6ac0" opacity="1.00"/><circle cx="39.6" cy="81.4" r="1.30" fill="#6a6ac0" opacity="1.00"/><circle cx="51.4" cy="82.6" r="1.30" fill="#6a6ac0" opacity="1.00"/><path d="M54.8 47.0L59.8 58.2M61.0 42.6L59.8 58.2M59.8 58.2L60.4 62.0M60.4 62.0L72.9 57.6" stroke="#d4d450" stroke-width="1.2" fill="none"/><path d="M19.1 46.4L25.0 43.9M25.0 43.9L31.0 46.8M31.0 46.8L37.2 43.2M37.2 43.2L42.9 47.0M42.9 47.0L49.1 42.6M49.1 42.6L54.8 47.0M54.8 47.0L61.0 42.6M26.0 58.2L37.2 58.2M37.2 58.2L48.5 55.8M48.5 55.8L59.8 58.2M26.0 58.2L25.0 43.9M37.2 58.2L37.2 43.2M48.5 55.8L49.1 42.6" stroke="#dce070" stroke-width=".8" fill="none" opacity=".55"/><circle cx="19.1" cy="46.4" r="1.2" fill="#e0e060" opacity="0.8"/><circle cx="25.0" cy="43.9" r="1.2" fill="#e0e060" opacity="0.8"/><circle cx="31.0" cy="46.8" r="1.2" fill="#e0e060" opacity="0.8"/><circle cx="37.2" cy="43.2" r="1.2" fill="#e0e060" opacity="0.8"/><circle cx="42.9" cy="47.0" r="1.2" fill="#e0e060" opacity="0.8"/><circle cx="49.1" cy="42.6" r="1.2" fill="#e0e060" opacity="0.8"/><circle cx="54.8" cy="47.0" r="1.2" fill="#e0e060" opacity="1"/><circle cx="61.0" cy="42.6" r="1.2" fill="#e0e060" opacity="1"/><circle cx="26.0" cy="58.2" r="1.2" fill="#e0e060" opacity="1"/><circle cx="37.2" cy="58.2" r="1.2" fill="#e0e060" opacity="1"/><circle cx="48.5" cy="55.8" r="1.2" fill="#e0e060" opacity="1"/><circle cx="59.8" cy="58.2" r="1.5" fill="#e0e060" opacity="1"/><circle cx="60.4" cy="62.0" r="1.5" fill="#e0e060" opacity="1"/><circle cx="72.9" cy="57.6" r="1.5" fill="#e0e060" opacity="1"/><circle cx="94.8" cy="45.1" r="1" fill="#e8ecb0" opacity=".7"/></g><text x="2.6" y="6.6" font-family="Liberation Sans,sans-serif" font-size="4.6" fill="#5050b4" opacity=".9">Dislocation</text><text x="2.6" y="13.4" font-family="Liberation Sans,sans-serif" font-size="4.6" fill="#5050b4" opacity=".9">Loop</text><circle cx="113.2" cy="4.8" r="1.3" fill="#4040a0"/><circle cx="113.2" cy="9.3" r="1.3" fill="#b0b840"/><rect x="115.7" y="4.2" width=".6" height="1.4" fill="#99a"/><rect x="115.7" y="8.7" width=".6" height="1.4" fill="#99a"/></svg></div>
<div class="abs lb" style="left:1px;top:258px;letter-spacing:0.09px">Dislocation Loop</div>
<div class="abs th" style="left:250px;top:159px"><svg width="120" height="90" viewBox="0 0 120 90"><defs><radialGradient id="f6r" cx="0" cy="0" r="2.2" gradientUnits="userSpaceOnUse" spreadMethod="repeat"><stop offset="0" stop-color="#6f9a68"/><stop offset=".5" stop-color="#a8a850"/><stop offset="1" stop-color="#6f9a68"/></radialGradient><radialGradient id="f6c" cx="50%" cy="50%" r="50%"><stop offset="0" stop-color="#1a8cf0"/><stop offset=".45" stop-color="#2a90e0"/><stop offset=".7" stop-color="#40b0c0" stop-opacity=".6"/><stop offset="1" stop-color="#60b090" stop-opacity="0"/></radialGradient><clipPath id="f6f"><path d="M24.5 41.4L82.9 43.5L84.1 70.75L26 69.25z"/></clipPath><clipPath id="f6t"><path d="M37.25 18.9L95.4 20.1L82.9 43.5L24.5 41.4z"/></clipPath><filter id="f6b"><feGaussianBlur stdDeviation=".4"/></filter></defs><rect width="120" height="90" fill="#000"/><g filter="url(#f6b)"><path d="M37.25 18.9L95.4 20.1L82.9 43.5L24.5 41.4z" fill="#8fbf7c"/><path d="M82.9 43.5L95.4 20.1L96 48.25L84.1 70.75z" fill="#8ec888"/><path d="M24.5 41.4L82.9 43.5L84.1 70.75L26 69.25z" fill="#7e9c5e"/><g clip-path="url(#f6f)"><g transform="translate(39.1 55.1)"><circle r="15.5" fill="url(#f6r)" opacity=".85"/></g><g transform="translate(67.9 56.4)"><circle r="15.5" fill="url(#f6r)" opacity=".85"/></g><circle cx="39.1" cy="55.1" r="3.6" fill="url(#f6c)"/><circle cx="67.9" cy="56.4" r="3.8" fill="url(#f6c)"/><circle cx="53.5" cy="55.5" r="2.6" fill="url(#f6c)" opacity=".9"/><circle cx="26" cy="55" r="2.4" fill="url(#f6c)" opacity=".8"/><circle cx="82.5" cy="57" r="2.4" fill="url(#f6c)" opacity=".8"/><circle cx="39.5" cy="43" r="2.6" fill="url(#f6c)" opacity=".9"/><circle cx="67.5" cy="44" r="2.6" fill="url(#f6c)" opacity=".9"/><circle cx="40" cy="69" r="2.6" fill="url(#f6c)" opacity=".8"/><circle cx="68" cy="70" r="2.6" fill="url(#f6c)" opacity=".8"/><path d="M24.5 42.4L82.9 44.5" stroke="#d8d040" stroke-width="1.4" stroke-dasharray="1.6 1.8" opacity=".85"/><path d="M26 69L84 70.4" stroke="#d8c040" stroke-width="1.2" stroke-dasharray="1.6 1.8" opacity=".7"/><circle cx="53.5" cy="69.5" r="1.6" fill="#e0c040" opacity=".8"/><circle cx="53.2" cy="43.5" r="1.6" fill="#e8d848" opacity=".8"/><circle cx="25.5" cy="42" r="1.4" fill="#e8e040"/><circle cx="82" cy="44.5" r="1.4" fill="#e8e040"/><circle cx="26.5" cy="68.5" r="1.3" fill="#e0c840"/><circle cx="83.5" cy="70" r="1.3" fill="#e08030"/></g><g clip-path="url(#f6t)" fill="#38b8d8" opacity=".85"><ellipse cx="48" cy="24" rx="2.4" ry="1"/><ellipse cx="62" cy="25.5" rx="2" ry=".9"/><ellipse cx="77" cy="25.8" rx="2.6" ry="1"/><ellipse cx="90" cy="26" rx="1.6" ry=".9"/><ellipse cx="44" cy="30.5" rx="2" ry=".9"/><ellipse cx="59" cy="31" rx="3" ry="1.1"/><ellipse cx="74" cy="31.8" rx="2" ry=".9"/><ellipse cx="86" cy="32" rx="1.6" ry=".8"/><ellipse cx="41" cy="36.5" rx="2.4" ry="1"/><ellipse cx="55" cy="37.2" rx="2" ry=".9"/><ellipse cx="70" cy="37.6" rx="2.6" ry="1"/><ellipse cx="83" cy="37.8" rx="1.6" ry=".8"/><ellipse cx="32" cy="30" rx="1.2" ry=".7" fill="#d0e890"/><ellipse cx="29" cy="36" rx="1.2" ry=".7" fill="#60c0c0"/><ellipse cx="52" cy="19.5" rx="2" ry=".7"/><ellipse cx="66" cy="20" rx="2" ry=".7"/><ellipse cx="80" cy="20.2" rx="2" ry=".7"/></g><g fill="#40b8d0" opacity=".75"><ellipse cx="92.5" cy="39" rx=".6" ry="2"/><ellipse cx="89" cy="45" rx=".7" ry="1.2"/><ellipse cx="85.5" cy="51" rx=".6" ry="1.6"/><ellipse cx="94.8" cy="33" rx=".5" ry="1.4"/><ellipse cx="85.2" cy="62" rx=".5" ry="1.4"/></g></g></svg></div>
<div class="abs lb" style="left:207px;top:258px;letter-spacing:-0.05px">Electron Density Block</div>
<div class="abs th" style="left:456px;top:159px"><svg width="120" height="90" viewBox="0 0 120 90"><defs><radialGradient id="g7e" cx="38%" cy="32%" r="70%"><stop offset="0" stop-color="#d8f0c8"/><stop offset=".1" stop-color="#8ac080"/><stop offset=".4" stop-color="#4f9050"/><stop offset=".8" stop-color="#3a7a3c"/><stop offset="1" stop-color="#2a5a2c"/></radialGradient><radialGradient id="g7d" cx="38%" cy="32%" r="70%"><stop offset="0" stop-color="#a0b8a0"/><stop offset=".3" stop-color="#587858"/><stop offset="1" stop-color="#3a4a40"/></radialGradient><radialGradient id="g7m" cx="40%" cy="35%" r="65%"><stop offset="0" stop-color="#f060e0"/><stop offset=".5" stop-color="#b020a8"/><stop offset="1" stop-color="#700a70"/></radialGradient><filter id="g7b"><feGaussianBlur stdDeviation=".35"/></filter></defs><rect width="120" height="90" fill="#d5e5fb"/><g filter="url(#g7b)" transform="translate(.5 0)"><path d="M60.9 22L37.1 43.25L61.5 67L81.5 47z" fill="#a88cc4" opacity=".85"/><path d="M60.9 22L59 43.3L81.5 47z" fill="#5a4a60" opacity=".75"/><ellipse cx="69" cy="34.5" rx="10.5" ry="8.2" transform="rotate(25 69 34.5)" fill="url(#g7d)"/><path d="M60.9 22L59 43.3L37.1 43.25z" fill="#b498cc" opacity=".8"/><path d="M59 43.3L81.5 47L61.5 67z" fill="#9c80b8" opacity=".9"/><g stroke="#6a3c84" stroke-width=".7" fill="none"><path d="M60.9 22L37.1 43.25L61.5 67L81.5 47z"/><path d="M60.9 22L59 43.3L61.5 67M37.1 43.25L59 43.3L81.5 47"/><path d="M37.1 41.5L59 42M37.1 45L59 45" opacity=".7"/><path d="M59 44L81 45.5M59 46L80 48.5" stroke="#c8a0d8" opacity=".9"/><path d="M58.5 23L56.5 40M62.5 23L60.5 40" stroke="#c0a0d0"/></g><circle cx="59" cy="43.6" r="5.2" fill="url(#g7m)"/><circle cx="63" cy="47.5" r="3.4" fill="url(#g7m)"/><ellipse cx="60.9" cy="15.75" rx="12.6" ry="7.3" fill="url(#g7e)"/><ellipse cx="30.25" cy="43" rx="7.3" ry="14.5" fill="url(#g7e)"/><ellipse cx="88" cy="47.25" rx="8.5" ry="10.7" transform="rotate(-8 88 47.25)" fill="url(#g7e)"/><path d="M56 62.5L57 69M59 62L59.5 69M61.5 62L62 68" stroke="#6a3c84" stroke-width=".7"/><ellipse cx="50.9" cy="53.25" rx="12" ry="10" transform="rotate(18 50.9 53.25)" fill="url(#g7e)"/><ellipse cx="59" cy="73.9" rx="11.3" ry="7.2" transform="rotate(14 59 73.9)" fill="url(#g7e)"/></g><circle cx="113.2" cy="5.1" r="1.4" fill="#70a080"/><circle cx="113.4" cy="9.5" r="1.4" fill="#c030c0"/><circle cx="115.6" cy="4.6" r=".7" fill="#b8d8c0"/></svg></div>
<div class="abs lb" style="left:413px;top:258px">Ellipsoids in Polyhedron</div>
<div class="abs th" style="left:663px;top:159px"><svg width="120" height="90" viewBox="0 0 120 90"><defs><radialGradient id="h8r" cx="38%" cy="32%" r="70%"><stop offset="0" stop-color="#e87078"/><stop offset=".3" stop-color="#b82232"/><stop offset="1" stop-color="#700c1c"/></radialGradient><radialGradient id="h8o" cx="38%" cy="32%" r="70%"><stop offset="0" stop-color="#f0c880"/><stop offset=".4" stop-color="#c08838"/><stop offset="1" stop-color="#805018"/></radialGradient><filter id="h8b"><feGaussianBlur stdDeviation=".25"/></filter></defs><rect width="120" height="90" fill="#c9e0fb"/><g filter="url(#h8b)"><path d="M47.9 10.5L41.6 6.8M47.9 10.5L54.5 6.8M47.9 10.5L47.9 17.5M71.9 10.5L65.1 6.8M71.9 10.5L78.1 6.8M71.9 10.5L71.9 17.5M36.0 30.8L29.8 27.2M36.0 30.8L42.5 27.2M36.0 30.8L36.0 38.1M59.8 30.8L53.2 27.2M59.8 30.8L66.2 27.2M59.8 30.8L59.8 38.1M83.8 30.8L77.0 27.2M83.8 30.8L90.0 27.2M83.8 30.8L83.8 38.1M24.1 51.6L17.9 48.0M24.1 51.6L30.8 48.0M24.1 51.6L24.1 59.0M47.9 51.6L41.4 48.0M47.9 51.6L54.1 48.0M47.9 51.6L47.9 59.0M95.6 51.6L88.9 48.0M95.6 51.6L102.0 48.0M95.6 51.6L95.6 59.0M36.0 72.0L29.8 68.6M36.0 72.0L42.5 68.6M36.0 72.0L36.0 79.5M59.8 72.0L53.2 68.6M59.8 72.0L66.2 68.6M59.8 72.0L59.8 79.5M83.8 72.0L77.0 68.6M83.8 72.0L90.0 68.6M83.8 72.0L83.8 79.5M47.9 23.6L47.9 17.5M47.9 23.6L42.5 21.0M47.9 23.6L53.2 21.0M47.9 23.6L42.5 27.2M47.9 23.6L53.2 27.2M47.9 23.6L47.9 30.5M71.9 23.6L71.9 17.5M71.9 23.6L66.2 21.0M71.9 23.6L77.0 21.0M71.9 23.6L66.2 27.2M71.9 23.6L77.0 27.2M71.9 23.6L71.9 30.5M36.0 44.9L36.0 38.1M36.0 44.9L30.8 41.8M36.0 44.9L41.4 41.8M36.0 44.9L30.8 48.0M36.0 44.9L41.4 48.0M36.0 44.9L36.0 51.1M83.8 44.9L83.8 38.1M83.8 44.9L78.1 41.8M83.8 44.9L88.9 41.8M83.8 44.9L78.1 48.0M83.8 44.9L88.9 48.0M83.8 44.9L83.8 51.1M47.9 65.4L47.9 59.0M47.9 65.4L42.5 62.2M47.9 65.4L53.2 62.2M47.9 65.4L42.5 68.6M47.9 65.4L53.2 68.6M47.9 65.4L47.9 71.8M71.9 65.4L71.9 59.0M71.9 65.4L66.2 62.2M71.9 65.4L77.0 62.2M71.9 65.4L66.2 68.6M71.9 65.4L77.0 68.6M71.9 65.4L71.9 71.8M59.8 44.9L59.8 38.1M59.8 44.9L54.1 41.8M59.8 44.9L65.4 41.8M59.8 44.9L54.1 48.0M59.8 44.9L65.4 48.0M59.8 44.9L59.8 51.1M71.9 51.6L65.4 48.0M71.9 51.6L78.1 48.0M71.9 51.6L71.9 59.0M41.6 6.8L36.0 9.9M54.5 6.8L59.8 9.9M65.1 6.8L59.8 9.9M78.1 6.8L83.8 9.9M36.0 9.9L36.0 17.5M59.8 9.9L59.8 17.5M83.8 9.9L83.8 17.5M36.0 17.5L29.8 21.0M36.0 17.5L42.5 21.0M47.9 17.5L42.5 21.0M47.9 17.5L53.2 21.0M59.8 17.5L53.2 21.0M59.8 17.5L66.2 21.0M71.9 17.5L66.2 21.0M71.9 17.5L77.0 21.0M83.8 17.5L77.0 21.0M83.8 17.5L90.0 21.0M29.8 21.0L29.8 27.2M42.5 21.0L42.5 27.2M53.2 21.0L53.2 27.2M66.2 21.0L66.2 27.2M77.0 21.0L77.0 27.2M90.0 21.0L90.0 27.2M29.8 27.2L24.1 30.5M42.5 27.2L47.9 30.5M53.2 27.2L47.9 30.5M66.2 27.2L71.9 30.5M77.0 27.2L71.9 30.5M90.0 27.2L95.6 30.5M24.1 30.5L24.1 38.1M47.9 30.5L47.9 38.1M71.9 30.5L71.9 38.1M95.6 30.5L95.6 38.1M24.1 38.1L17.9 41.8M24.1 38.1L30.8 41.8M36.0 38.1L30.8 41.8M36.0 38.1L41.4 41.8M47.9 38.1L41.4 41.8M47.9 38.1L54.1 41.8M59.8 38.1L54.1 41.8M59.8 38.1L65.4 41.8M71.9 38.1L65.4 41.8M71.9 38.1L78.1 41.8M83.8 38.1L78.1 41.8M83.8 38.1L88.9 41.8M95.6 38.1L88.9 41.8M95.6 38.1L102.0 41.8M17.9 41.8L17.9 48.0M30.8 41.8L30.8 48.0M41.4 41.8L41.4 48.0M54.1 41.8L54.1 48.0M65.4 41.8L65.4 48.0M78.1 41.8L78.1 48.0M88.9 41.8L88.9 48.0M102.0 41.8L102.0 48.0M30.8 48.0L36.0 51.1M41.4 48.0L36.0 51.1M54.1 48.0L59.8 51.1M65.4 48.0L59.8 51.1M78.1 48.0L83.8 51.1M88.9 48.0L83.8 51.1M36.0 51.1L36.0 59.0M59.8 51.1L59.8 59.0M83.8 51.1L83.8 59.0M24.1 59.0L29.8 62.2M36.0 59.0L29.8 62.2M36.0 59.0L42.5 62.2M47.9 59.0L42.5 62.2M47.9 59.0L53.2 62.2M59.8 59.0L53.2 62.2M59.8 59.0L66.2 62.2M71.9 59.0L66.2 62.2M71.9 59.0L77.0 62.2M83.8 59.0L77.0 62.2M83.8 59.0L90.0 62.2M95.6 59.0L90.0 62.2M29.8 62.2L29.8 68.6M42.5 62.2L42.5 68.6M53.2 62.2L53.2 68.6M66.2 62.2L66.2 68.6M77.0 62.2L77.0 68.6M90.0 62.2L90.0 68.6M42.5 68.6L47.9 71.8M53.2 68.6L47.9 71.8M66.2 68.6L71.9 71.8M77.0 68.6L71.9 71.8M47.9 71.8L47.9 79.5M71.9 71.8L71.9 79.5M36.0 79.5L41.6 83.0M47.9 79.5L41.6 83.0M47.9 79.5L54.5 83.0M59.8 79.5L54.5 83.0M59.8 79.5L65.1 83.0M71.9 79.5L65.1 83.0M71.9 79.5L78.1 83.0M83.8 79.5L78.1 83.0" stroke="#70869e" stroke-width=".6" fill="none"/><circle cx="47.9" cy="23.6" r=".9" fill="#5088a8"/><circle cx="71.9" cy="23.6" r=".9" fill="#5088a8"/><circle cx="36.0" cy="44.9" r=".9" fill="#5088a8"/><circle cx="83.8" cy="44.9" r=".9" fill="#5088a8"/><circle cx="47.9" cy="65.4" r=".9" fill="#5088a8"/><circle cx="71.9" cy="65.4" r=".9" fill="#5088a8"/><polygon points="65.3,44.9 62.5,49.7 57.0,49.7 54.1,44.9 56.9,40.0 62.5,40.0" fill="#2a3a6a"/><circle cx="59.8" cy="44.9" r="4.2" fill="#3a80c8"/><circle cx="59.0" cy="44.1" r="2" fill="#58a0d8" opacity=".7"/><polygon points="66.2,48.0 77.5,48.0 71.9,57.5" fill="#c89820" stroke="#806010" stroke-width=".5"/><circle cx="71.5" cy="51.0" r=".8" fill="#e8c850"/><circle cx="41.6" cy="6.8" r="1.95" fill="url(#h8r)"/><circle cx="54.5" cy="6.8" r="1.95" fill="url(#h8r)"/><circle cx="65.1" cy="6.8" r="1.95" fill="url(#h8r)"/><circle cx="78.1" cy="6.8" r="1.95" fill="url(#h8r)"/><circle cx="36.0" cy="9.9" r="1.95" fill="url(#h8r)"/><circle cx="59.8" cy="9.9" r="1.95" fill="url(#h8r)"/><circle cx="83.8" cy="9.9" r="1.95" fill="url(#h8r)"/><circle cx="36.0" cy="17.5" r="1.95" fill="url(#h8r)"/><circle cx="47.9" cy="17.5" r="1.95" fill="url(#h8r)"/><circle cx="59.8" cy="17.5" r="1.95" fill="url(#h8r)"/><circle cx="71.9" cy="17.5" r="1.95" fill="url(#h8r)"/><circle cx="83.8" cy="17.5" r="1.95" fill="url(#h8r)"/><circle cx="29.8" cy="21.0" r="1.95" fill="url(#h8r)"/><circle cx="42.5" cy="21.0" r="1.95" fill="url(#h8r)"/><circle cx="53.2" cy="21.0" r="1.95" fill="url(#h8r)"/><circle cx="66.2" cy="21.0" r="1.95" fill="url(#h8r)"/><circle cx="77.0" cy="21.0" r="1.95" fill="url(#h8r)"/><circle cx="90.0" cy="21.0" r="1.95" fill="url(#h8r)"/><circle cx="29.8" cy="27.2" r="1.95" fill="url(#h8r)"/><circle cx="42.5" cy="27.2" r="1.95" fill="url(#h8r)"/><circle cx="53.2" cy="27.2" r="1.95" fill="url(#h8r)"/><circle cx="66.2" cy="27.2" r="1.95" fill="url(#h8r)"/><circle cx="77.0" cy="27.2" r="1.95" fill="url(#h8r)"/><circle cx="90.0" cy="27.2" r="1.95" fill="url(#h8r)"/><circle cx="24.1" cy="30.5" r="1.95" fill="url(#h8r)"/><circle cx="47.9" cy="30.5" r="1.95" fill="url(#h8r)"/><circle cx="71.9" cy="30.5" r="1.95" fill="url(#h8r)"/><circle cx="95.6" cy="30.5" r="1.95" fill="url(#h8r)"/><circle cx="24.1" cy="38.1" r="1.95" fill="url(#h8r)"/><circle cx="36.0" cy="38.1" r="1.95" fill="url(#h8r)"/><circle cx="47.9" cy="38.1" r="1.95" fill="url(#h8r)"/><circle cx="59.8" cy="38.1" r="1.95" fill="url(#h8r)"/><circle cx="71.9" cy="38.1" r="1.95" fill="url(#h8r)"/><circle cx="83.8" cy="38.1" r="1.95" fill="url(#h8r)"/><circle cx="95.6" cy="38.1" r="1.95" fill="url(#h8r)"/><circle cx="17.9" cy="41.8" r="1.95" fill="url(#h8r)"/><circle cx="30.8" cy="41.8" r="1.95" fill="url(#h8r)"/><circle cx="41.4" cy="41.8" r="1.95" fill="url(#h8r)"/><circle cx="54.1" cy="41.8" r="1.95" fill="url(#h8r)"/><circle cx="65.4" cy="41.8" r="1.95" fill="url(#h8r)"/><circle cx="78.1" cy="41.8" r="1.95" fill="url(#h8r)"/><circle cx="88.9" cy="41.8" r="1.95" fill="url(#h8r)"/><circle cx="102.0" cy="41.8" r="1.95" fill="url(#h8r)"/><circle cx="17.9" cy="48.0" r="1.95" fill="url(#h8r)"/><circle cx="30.8" cy="48.0" r="1.95" fill="url(#h8r)"/><circle cx="41.4" cy="48.0" r="1.95" fill="url(#h8r)"/><circle cx="54.1" cy="48.0" r="1.95" fill="url(#h8r)"/><circle cx="65.4" cy="48.0" r="1.95" fill="url(#h8r)"/><circle cx="78.1" cy="48.0" r="1.95" fill="url(#h8r)"/><circle cx="88.9" cy="48.0" r="1.95" fill="url(#h8r)"/><circle cx="102.0" cy="48.0" r="1.95" fill="url(#h8r)"/><circle cx="36.0" cy="51.1" r="1.95" fill="url(#h8r)"/><circle cx="59.8" cy="51.1" r="1.95" fill="url(#h8r)"/><circle cx="83.8" cy="51.1" r="1.95" fill="url(#h8r)"/><circle cx="24.1" cy="59.0" r="1.95" fill="url(#h8r)"/><circle cx="36.0" cy="59.0" r="1.95" fill="url(#h8r)"/><circle cx="47.9" cy="59.0" r="1.95" fill="url(#h8r)"/><circle cx="59.8" cy="59.0" r="1.95" fill="url(#h8r)"/><circle cx="71.9" cy="59.0" r="1.95" fill="url(#h8r)"/><circle cx="83.8" cy="59.0" r="1.95" fill="url(#h8r)"/><circle cx="95.6" cy="59.0" r="1.95" fill="url(#h8r)"/><circle cx="29.8" cy="62.2" r="1.95" fill="url(#h8r)"/><circle cx="42.5" cy="62.2" r="1.95" fill="url(#h8r)"/><circle cx="53.2" cy="62.2" r="1.95" fill="url(#h8r)"/><circle cx="66.2" cy="62.2" r="1.95" fill="url(#h8r)"/><circle cx="77.0" cy="62.2" r="1.95" fill="url(#h8r)"/><circle cx="90.0" cy="62.2" r="1.95" fill="url(#h8r)"/><circle cx="29.8" cy="68.6" r="1.95" fill="url(#h8r)"/><circle cx="42.5" cy="68.6" r="1.95" fill="url(#h8r)"/><circle cx="53.2" cy="68.6" r="1.95" fill="url(#h8r)"/><circle cx="66.2" cy="68.6" r="1.95" fill="url(#h8r)"/><circle cx="77.0" cy="68.6" r="1.95" fill="url(#h8r)"/><circle cx="90.0" cy="68.6" r="1.95" fill="url(#h8r)"/><circle cx="47.9" cy="71.8" r="1.95" fill="url(#h8r)"/><circle cx="71.9" cy="71.8" r="1.95" fill="url(#h8r)"/><circle cx="36.0" cy="79.5" r="1.95" fill="url(#h8r)"/><circle cx="47.9" cy="79.5" r="1.95" fill="url(#h8r)"/><circle cx="59.8" cy="79.5" r="1.95" fill="url(#h8r)"/><circle cx="71.9" cy="79.5" r="1.95" fill="url(#h8r)"/><circle cx="83.8" cy="79.5" r="1.95" fill="url(#h8r)"/><circle cx="41.6" cy="83.0" r="1.95" fill="url(#h8r)"/><circle cx="54.5" cy="83.0" r="1.95" fill="url(#h8r)"/><circle cx="65.1" cy="83.0" r="1.95" fill="url(#h8r)"/><circle cx="78.1" cy="83.0" r="1.95" fill="url(#h8r)"/><circle cx="47.9" cy="10.5" r="1.9" fill="url(#h8o)"/><circle cx="71.9" cy="10.5" r="1.9" fill="url(#h8o)"/><circle cx="36.0" cy="30.8" r="1.9" fill="url(#h8o)"/><circle cx="59.8" cy="30.8" r="1.9" fill="url(#h8o)"/><circle cx="83.8" cy="30.8" r="1.9" fill="url(#h8o)"/><circle cx="24.1" cy="51.6" r="1.9" fill="url(#h8o)"/><circle cx="47.9" cy="51.6" r="1.9" fill="url(#h8o)"/><circle cx="95.6" cy="51.6" r="1.9" fill="url(#h8o)"/><circle cx="36.0" cy="72.0" r="1.9" fill="url(#h8o)"/><circle cx="59.8" cy="72.0" r="1.9" fill="url(#h8o)"/><circle cx="83.8" cy="72.0" r="1.9" fill="url(#h8o)"/></g><rect x="111.5" y="4.4" width="4.5" height="1.6" fill="#a8c0e0" opacity=".8"/><rect x="111.5" y="8.8" width="5" height="1.2" fill="#90a890" opacity=".7"/><circle cx="112.9" cy="13.5" r="1.4" fill="#a81828"/><rect x="115" y="13" width="1.4" height=".8" fill="#c08080"/></svg></div>
<div class="abs lb" style="left:620px;top:258px;letter-spacing:-0.07px">Mixed Poly Styles</div>
<div class="abs th" style="left:44px;top:307px"><svg width="120" height="90" viewBox="0 0 120 90"><defs><linearGradient id="i9v" x1="0" y1="0" x2="1" y2="0"><stop offset="0" stop-color="#c49a10"/><stop offset=".2" stop-color="#deb416"/><stop offset=".6" stop-color="#eac41c"/><stop offset="1" stop-color="#c8a010"/></linearGradient><linearGradient id="i9h" x1="0" y1="0" x2="0" y2="1"><stop offset="0" stop-color="#d0a810"/><stop offset=".25" stop-color="#eac41c"/><stop offset=".7" stop-color="#deb416"/><stop offset="1" stop-color="#c09410"/></linearGradient><radialGradient id="i9r" cx="45%" cy="40%" r="60%"><stop offset="0" stop-color="#d84030"/><stop offset=".6" stop-color="#c02418"/><stop offset="1" stop-color="#8a1408"/></radialGradient><filter id="i9b"><feGaussianBlur stdDeviation=".45"/></filter></defs><rect width="120" height="90" fill="#000"/><g filter="url(#i9b)"><path d="M19.5 7.6L90.4 6.4M19.5 7.6L20.4 79.5L28.25 83M19.5 7.6L28.25 10.75M90.4 6.4L99.75 10.2" stroke="#aaa" stroke-width=".5" fill="none" opacity=".8"/><!-- back bits --><rect x="22" y="19.5" width="8" height="14" fill="#d89020"/><rect x="22" y="56" width="8" height="13" fill="#d89020"/><rect x="33" y="7.8" width="14" height="6" fill="#e09828"/><rect x="68" y="7.4" width="14" height="6" fill="#e09828"/><!-- vertical bars --><path d="M33 9.5Q42 8 51 10.5L50.5 34Q52 45 51 55L51.5 80Q42 82.5 33.5 80L32.5 55Q31 45 32.5 34z" fill="url(#i9v)"/><path d="M68 9.5Q77 8 86 10L85.5 34Q87 45 86 55L86 80.5Q77 82 68.5 80L68 55Q66.5 45 68 34z" fill="url(#i9v)"/><!-- horizontal bars --><path d="M21.8 19.5Q26 18 33 19L51 18.5Q59 17.5 68 18.5L86 18.5Q93 18 97.8 19.5L98 33.5Q93 34.5 86 34L68 34.2Q59 33 51 34.2L33 34.5Q26 35 22 33.5z" fill="url(#i9h)"/><path d="M21.8 56Q26 54.5 33 55L51 54.5Q59 53.5 68 54.5L86 54.5Q93 54 97.8 55.5L98 69.5Q93 71 86 70.5L68 70.6Q59 69.4 51 70.6L33 71Q26 71.5 22 70z" fill="url(#i9h)"/><rect x="34" y="20" width="16" height="13" fill="#e6be1a"/><rect x="69" y="20" width="16" height="13" fill="#e6be1a"/><rect x="34" y="56" width="16" height="13.5" fill="#e6be1a"/><rect x="69" y="56" width="16" height="13.5" fill="#e6be1a"/><rect x="22" y="20" width="3" height="13" fill="#e08420" opacity=".8"/><rect x="22" y="56.5" width="3" height="13" fill="#e08420" opacity=".8"/><!-- red ellipsoids --><g fill="url(#i9r)"><ellipse cx="45.75" cy="28.25" rx="7.6" ry="5.4" transform="rotate(-42 45.75 28.25)"/><ellipse cx="81.25" cy="28" rx="7.6" ry="5.4" transform="rotate(42 81.25 28)"/><ellipse cx="46" cy="63.9" rx="7.6" ry="5.4" transform="rotate(42 46 63.9)"/><ellipse cx="81.6" cy="63.25" rx="7.6" ry="5.4" transform="rotate(-42 81.6 63.25)"/></g><g fill="#b0a0a8" opacity=".8"><circle cx="44" cy="30" r=".8"/><circle cx="46" cy="28" r=".8"/><circle cx="48" cy="26.2" r=".8"/><circle cx="79.5" cy="26.2" r=".8"/><circle cx="81.5" cy="28" r=".8"/><circle cx="83.4" cy="30" r=".8"/><circle cx="44.2" cy="62" r=".8"/><circle cx="46.2" cy="64" r=".8"/><circle cx="48" cy="66" r=".8"/><circle cx="79.8" cy="65" r=".8"/><circle cx="81.8" cy="63" r=".8"/><circle cx="83.6" cy="61.2" r=".8"/></g><path d="M28.25 10.75L99.75 10.2L100 82.6L28.25 83z" stroke="#c8c8c8" stroke-width=".55" fill="none" opacity=".9"/></g><rect x="112.4" y="3.6" width=".6" height="2" fill="#888"/><rect x="115" y="4" width="1" height="1.6" fill="#888"/><circle cx="111.8" cy="9" r="1.3" fill="#c03040"/><rect x="115" y="8.4" width=".8" height="1.4" fill="#888"/><circle cx="112.2" cy="13.6" r="1.4" fill="#b02838"/><rect x="114.8" y="13" width="1.6" height=".9" fill="#999"/></svg></div>
<div class="abs lb" style="left:1px;top:406px;letter-spacing:-0.09px">MOF Framework</div>
<div class="abs th" style="left:250px;top:307px"><svg width="120" height="90" viewBox="0 0 120 90"><defs><radialGradient id="j10b" cx="40%" cy="35%" r="65%"><stop offset="0" stop-color="#3040f0"/><stop offset=".5" stop-color="#1018c0"/><stop offset="1" stop-color="#060870"/></radialGradient><radialGradient id="j10o" cx="40%" cy="35%" r="65%"><stop offset="0" stop-color="#ec9434"/><stop offset=".5" stop-color="#c46e14"/><stop offset="1" stop-color="#5c2e06"/></radialGradient><radialGradient id="j10g" cx="40%" cy="35%" r="65%"><stop offset="0" stop-color="#909090"/><stop offset=".5" stop-color="#5e5e5e"/><stop offset="1" stop-color="#2a2a2a"/></radialGradient><radialGradient id="j10y" cx="40%" cy="35%" r="65%"><stop offset="0" stop-color="#dccc34"/><stop offset=".5" stop-color="#b09c1c"/><stop offset="1" stop-color="#54480a"/></radialGradient><pattern id="j10h" x="6" y="34.4" width="7.8" height="4.5" patternUnits="userSpaceOnUse"><path d="M0 2.25L1.3 0H3.9L5.2 2.25L3.9 4.5H1.3zM5.2 2.25H7.8" stroke="#d0d0d0" stroke-width=".7" fill="none"/></pattern><pattern id="j10h2" x="8.5" y="35.6" width="7.8" height="4.5" patternUnits="userSpaceOnUse"><path d="M0 2.25L1.3 0H3.9L5.2 2.25L3.9 4.5H1.3zM5.2 2.25H7.8" stroke="#8a8a8a" stroke-width=".6" fill="none"/></pattern><filter id="j10f"><feGaussianBlur stdDeviation=".4"/></filter></defs><rect width="120" height="90" fill="#000"/><g filter="url(#j10f)"><rect x="6.6" y="34.6" width="107" height="20.6" rx="2" fill="url(#j10h2)"/><circle cx="24.1" cy="43.9" r="4.1" fill="url(#j10b)"/><circle cx="25.4" cy="48.2" r="3.4" fill="url(#j10b)"/><circle cx="39.1" cy="44.5" r="4.1" fill="url(#j10b)"/><circle cx="40.4" cy="49.5" r="3.4" fill="url(#j10b)"/><circle cx="56.6" cy="40.8" r="3.4" fill="url(#j10b)"/><circle cx="14.8" cy="51.4" r="2.2" fill="url(#j10b)"/><circle cx="77.2" cy="44.5" r="3.4" fill="url(#j10b)"/><circle cx="79.1" cy="48.9" r="2.8" fill="url(#j10b)"/><circle cx="86.0" cy="40.8" r="3.8" fill="url(#j10b)"/><circle cx="96.0" cy="38.9" r="2.8" fill="url(#j10b)"/><circle cx="97.9" cy="43.9" r="3.8" fill="url(#j10b)"/><circle cx="102.9" cy="40.1" r="3.4" fill="url(#j10b)"/><circle cx="17.2" cy="41.0" r="3.4" fill="url(#j10o)"/><circle cx="12.2" cy="47.0" r="2.8" fill="url(#j10o)"/><circle cx="18.5" cy="47.0" r="2.8" fill="url(#j10o)"/><circle cx="30.4" cy="43.9" r="2.8" fill="url(#j10o)"/><circle cx="63.5" cy="41.4" r="3.4" fill="url(#j10o)"/><circle cx="87.9" cy="47.0" r="3.4" fill="url(#j10o)"/><circle cx="71.0" cy="43.9" r="2.2" fill="url(#j10o)"/><circle cx="92.9" cy="33.2" r="2.8" fill="url(#j10o)"/><circle cx="12.2" cy="40.1" r="2.2" fill="url(#j10g)"/><circle cx="33.5" cy="39.5" r="2.6" fill="url(#j10g)"/><circle cx="48.5" cy="44.5" r="2.6" fill="url(#j10g)"/><circle cx="68.5" cy="40.8" r="2.2" fill="url(#j10g)"/><circle cx="82.2" cy="49.5" r="2.2" fill="url(#j10g)"/><circle cx="92.2" cy="44.5" r="2.2" fill="url(#j10g)"/><circle cx="106.0" cy="47.0" r="2.2" fill="url(#j10g)"/><circle cx="108.5" cy="39.5" r="1.9" fill="url(#j10g)"/><rect x="6.6" y="34.6" width="107" height="20.6" rx="2" fill="url(#j10h)"/><circle cx="22.9" cy="26.8" r="3.8" fill="url(#j10o)"/><circle cx="21.0" cy="32.6" r="2.8" fill="url(#j10o)"/><circle cx="31.0" cy="34.5" r="3.4" fill="url(#j10g)"/><circle cx="39.8" cy="34.5" r="3.0" fill="url(#j10g)"/><circle cx="56.0" cy="49.5" r="3.4" fill="url(#j10g)"/><circle cx="62.2" cy="52.0" r="3.8" fill="url(#j10g)"/><circle cx="71.0" cy="55.8" r="3.4" fill="url(#j10g)"/><circle cx="66.0" cy="60.8" r="3.4" fill="url(#j10g)"/><circle cx="26.0" cy="32.0" r="3.8" fill="url(#j10g)"/><circle cx="31.6" cy="29.8" r="4.1" fill="url(#j10y)"/><circle cx="34.8" cy="26.0" r="4.1" fill="url(#j10o)"/><circle cx="36.0" cy="33.2" r="4.1" fill="url(#j10g)"/><circle cx="42.2" cy="40.8" r="3.8" fill="url(#j10g)"/><circle cx="43.5" cy="35.8" r="5.2" fill="url(#j10o)"/><circle cx="47.2" cy="33.9" r="3.4" fill="url(#j10y)"/><circle cx="46.0" cy="40.1" r="2.8" fill="url(#j10o)"/><circle cx="19.1" cy="57.6" r="4.1" fill="url(#j10b)"/><circle cx="63.5" cy="47.0" r="4.7" fill="url(#j10g)"/><circle cx="69.8" cy="49.5" r="4.7" fill="url(#j10g)"/><circle cx="58.5" cy="53.2" r="4.1" fill="url(#j10g)"/><circle cx="67.2" cy="55.8" r="4.7" fill="url(#j10g)"/><circle cx="74.1" cy="58.2" r="3.8" fill="url(#j10g)"/><circle cx="54.8" cy="45.1" r="2.8" fill="url(#j10o)"/><circle cx="51.0" cy="47.6" r="5.2" fill="url(#j10y)"/><circle cx="51.6" cy="50.1" r="3.8" fill="url(#j10o)"/><circle cx="59.8" cy="58.2" r="4.1" fill="url(#j10y)"/><circle cx="62.9" cy="56.4" r="3.4" fill="url(#j10o)"/><circle cx="76.6" cy="62.6" r="3.8" fill="url(#j10o)"/><circle cx="60.4" cy="63.9" r="2.8" fill="url(#j10o)"/><circle cx="67.2" cy="65.1" r="4.7" fill="url(#j10y)"/><circle cx="69.1" cy="64.5" r="2.8" fill="url(#j10o)"/><circle cx="101.0" cy="28.2" r="3.8" fill="url(#j10g)"/><circle cx="103.5" cy="25.1" r="3.8" fill="url(#j10g)"/><circle cx="97.2" cy="30.1" r="2.8" fill="url(#j10o)"/><circle cx="106.0" cy="21.4" r="4.1" fill="url(#j10o)"/><circle cx="101.6" cy="33.5" r="4.1" fill="url(#j10b)"/></g></svg></div>
<div class="abs lb" style="left:207px;top:406px;letter-spacing:0.08px">Nanotube + Placed Molecule</div>
<div class="abs th" style="left:456px;top:307px"><svg width="120" height="90" viewBox="0 0 120 90"><defs><radialGradient id="k11p" cx="40%" cy="35%" r="65%"><stop offset="0" stop-color="#d090f0"/><stop offset=".45" stop-color="#9848c8"/><stop offset="1" stop-color="#5a1a88"/></radialGradient><radialGradient id="k11r" cx="40%" cy="35%" r="65%"><stop offset="0" stop-color="#f05048"/><stop offset=".4" stop-color="#c81818"/><stop offset="1" stop-color="#780808"/></radialGradient><radialGradient id="k11h" cx="40%" cy="35%" r="65%"><stop offset="0" stop-color="#fff"/><stop offset=".5" stop-color="#d0d0d0"/><stop offset="1" stop-color="#888"/></radialGradient><filter id="k11f"><feGaussianBlur stdDeviation=".3"/></filter></defs><rect width="120" height="90" fill="#fff"/><g filter="url(#k11f)"><path d="M19.5 12.2L30.8 18.0M30.8 18.0L31.8 31.0M31.8 31.0L21.1 38.5M21.1 38.5L9.5 32.2M9.5 32.2L8.6 19.5M8.6 19.5L19.5 12.2M88.2 58.5L98.6 51.0M98.6 51.0L110.4 57.4M110.4 57.4L111.0 69.9M111.0 69.9L100.5 77.0M100.5 77.0L89.1 71.4M89.1 71.4L88.2 58.5M19.5 12.2L19.1 3.9M30.8 18.0L38.2 13.2M21.1 38.5L21.4 47.0M9.5 32.2L3.0 37.9M8.6 19.5L1.4 15.8M98.6 51.0L98.9 43.0M110.4 57.4L117.2 52.0M111.0 69.9L118.9 74.5M100.5 77.0L101.4 86.0M89.1 71.4L82.2 77.0M31.8 31.0L46.1 37.2M46.1 37.2L53.5 30.1M46.1 37.2L44.5 48.6M53.5 30.1L60.8 33.9M73.9 52.2L75.4 40.8M73.9 52.2L66.4 59.5M66.4 59.5L59.1 55.8M73.9 52.2L88.2 58.5" stroke="#6a6a6a" stroke-width="1" fill="none"/><path d="M19.0 13.2L30.2 19.0M31.1 30.1L20.5 37.6M10.6 32.2L9.7 19.4M88.9 59.4L99.3 51.9M109.3 57.4L109.9 69.9M101.0 76.0L89.6 70.4M45.0 37.1L43.4 48.5M75.0 52.4L76.5 40.9" stroke="#8a8a8a" stroke-width=".6" fill="none"/><path d="M60.8 33.9L75.4 40.8" stroke="#bbb" stroke-width=".7" stroke-dasharray="1.2 1"/><path d="M59.1 55.8L44.5 48.6" stroke="#bbb" stroke-width=".7" stroke-dasharray="1.2 1"/><circle cx="19.1" cy="3.9" r="1.5" fill="url(#k11h)"/><circle cx="38.2" cy="13.2" r="1.5" fill="url(#k11h)"/><circle cx="21.4" cy="47.0" r="1.5" fill="url(#k11h)"/><circle cx="3.0" cy="37.9" r="1.5" fill="url(#k11h)"/><circle cx="1.4" cy="15.8" r="1.5" fill="url(#k11h)"/><circle cx="98.9" cy="43.0" r="1.5" fill="url(#k11h)"/><circle cx="117.2" cy="52.0" r="1.5" fill="url(#k11h)"/><circle cx="118.9" cy="74.5" r="1.5" fill="url(#k11h)"/><circle cx="101.4" cy="86.0" r="1.5" fill="url(#k11h)"/><circle cx="82.2" cy="77.0" r="1.5" fill="url(#k11h)"/><circle cx="60.8" cy="33.9" r="1.6" fill="url(#k11h)"/><circle cx="59.1" cy="55.8" r="1.6" fill="url(#k11h)"/><circle cx="19.5" cy="12.2" r="2.5" fill="url(#k11p)"/><circle cx="30.8" cy="18.0" r="2.5" fill="url(#k11p)"/><circle cx="31.8" cy="31.0" r="2.5" fill="url(#k11p)"/><circle cx="21.1" cy="38.5" r="2.5" fill="url(#k11p)"/><circle cx="9.5" cy="32.2" r="2.5" fill="url(#k11p)"/><circle cx="8.6" cy="19.5" r="2.5" fill="url(#k11p)"/><circle cx="88.2" cy="58.5" r="2.5" fill="url(#k11p)"/><circle cx="98.6" cy="51.0" r="2.5" fill="url(#k11p)"/><circle cx="110.4" cy="57.4" r="2.5" fill="url(#k11p)"/><circle cx="111.0" cy="69.9" r="2.5" fill="url(#k11p)"/><circle cx="100.5" cy="77.0" r="2.5" fill="url(#k11p)"/><circle cx="89.1" cy="71.4" r="2.5" fill="url(#k11p)"/><circle cx="46.1" cy="37.2" r="2.5" fill="url(#k11p)"/><circle cx="73.9" cy="52.2" r="2.5" fill="url(#k11p)"/><circle cx="53.5" cy="30.1" r="4.4" fill="url(#k11r)"/><circle cx="44.5" cy="48.6" r="4.4" fill="url(#k11r)"/><circle cx="75.4" cy="40.8" r="4.4" fill="url(#k11r)"/><circle cx="66.4" cy="59.5" r="4.4" fill="url(#k11r)"/></g><circle cx="113.6" cy="4.9" r="1.5" fill="#8a3ab8"/><circle cx="113.6" cy="9.3" r="1.1" fill="#8a8a8a"/><circle cx="113.6" cy="13.5" r="1.5" fill="#b01818"/><rect x="116" y="4.4" width=".6" height="1.2" fill="#aaa"/><rect x="116" y="8.8" width="1" height=".8" fill="#aaa"/><rect x="116" y="13.2" width="1" height=".7" fill="#c99"/></svg></div>
<div class="abs lb" style="left:413px;top:406px;letter-spacing:-0.10px">New Bond Types</div>
<div class="abs th" style="left:663px;top:307px"><svg width="120" height="90" viewBox="0 0 120 90"><defs><filter id="l12f"><feGaussianBlur stdDeviation=".4"/></filter></defs><rect width="120" height="90" fill="#fff"/><g filter="url(#l12f)"><rect x="58.2" y="19.2" width="7.5" height="19.6" fill="#e09414"/><rect x="61.0" y="18.2" width="4.8" height="20.6" fill="#c07c10"/><rect x="36.8" y="42.2" width="18.6" height="10.0" fill="#d88c14"/><rect x="69.1" y="44.5" width="15.0" height="7.8" fill="#e09414"/><rect x="58.5" y="50.8" width="7.2" height="21.2" fill="#e09414"/><rect x="61.0" y="49.5" width="4.8" height="22.5" fill="#c88010"/><polygon points="37.9,12.6 50.0,12.0 58.1,18.5 60.8,28.2 60.5,37.2 56.2,42.8 48.5,45.4 40.0,44.0 34.2,38.5 32.0,29.8 32.2,20.1" fill="#2088d0"/><polygon points="33.5,25.1 39.1,29.8 39.8,35.8 43.9,37.2 47.0,42.2 41.0,42.0 34.8,37.0 32.5,29.8" fill="#24a0e6"/><polygon points="46.0,26.8 54.1,26.8 58.1,31.4 58.1,37.2 54.1,42.2 47.0,42.2 43.9,37.2 43.9,31.4" fill="#28a6f0"/><polygon points="38.8,22.0 45.0,20.1 50.0,23.6 46.0,26.8 43.9,31.4 39.1,29.8" fill="#34e0fc"/><polygon points="34.1,19.2 38.2,15.5 45.0,15.8 45.0,20.1 38.8,22.0 35.0,24.8" fill="#30d2f8"/><polygon points="50.0,23.6 54.1,22.6 57.2,26.4 54.1,26.8 46.0,26.8" fill="#32c0f6"/><polygon points="38.2,15.5 45.0,15.8 50.0,13.5 44.8,13.0 38.5,13.5" fill="#2cb8f2"/><polygon points="39.1,29.8 43.9,31.4 43.9,37.2 39.8,35.8" fill="#2cc4f6"/><polygon points="66.6,12.6 78.8,12.0 86.9,18.5 89.5,28.2 89.2,37.2 85.0,42.8 77.2,45.4 68.8,44.0 63.0,38.5 60.8,29.8 61.0,20.1" fill="#2088d0"/><polygon points="62.2,25.1 67.9,29.8 68.5,35.8 72.6,37.2 75.8,42.2 69.8,42.0 63.5,37.0 61.2,29.8" fill="#24a0e6"/><polygon points="74.8,26.8 82.9,26.8 86.9,31.4 86.9,37.2 82.9,42.2 75.8,42.2 72.6,37.2 72.6,31.4" fill="#28a6f0"/><polygon points="67.5,22.0 73.8,20.1 78.8,23.6 74.8,26.8 72.6,31.4 67.9,29.8" fill="#34e0fc"/><polygon points="62.9,19.2 67.0,15.5 73.8,15.8 73.8,20.1 67.5,22.0 63.8,24.8" fill="#30d2f8"/><polygon points="78.8,23.6 82.9,22.6 86.0,26.4 82.9,26.8 74.8,26.8" fill="#32c0f6"/><polygon points="67.0,15.5 73.8,15.8 78.8,13.5 73.5,13.0 67.2,13.5" fill="#2cb8f2"/><polygon points="67.9,29.8 72.6,31.4 72.6,37.2 68.5,35.8" fill="#2cc4f6"/><polygon points="37.2,45.9 49.4,45.2 57.5,51.8 60.1,61.5 59.9,70.5 55.6,76.0 47.9,78.6 39.4,77.2 33.6,71.8 31.4,63.0 31.6,53.4" fill="#2088d0"/><polygon points="32.9,58.4 38.5,63.0 39.1,69.0 43.2,70.5 46.4,75.5 40.4,75.2 34.1,70.2 31.9,63.0" fill="#24a0e6"/><polygon points="45.4,60.0 53.5,60.0 57.5,64.6 57.5,70.5 53.5,75.5 46.4,75.5 43.2,70.5 43.2,64.6" fill="#28a6f0"/><polygon points="38.1,55.2 44.4,53.4 49.4,56.9 45.4,60.0 43.2,64.6 38.5,63.0" fill="#34e0fc"/><polygon points="33.5,52.5 37.6,48.8 44.4,49.0 44.4,53.4 38.1,55.2 34.4,58.0" fill="#30d2f8"/><polygon points="49.4,56.9 53.5,55.9 56.6,59.6 53.5,60.0 45.4,60.0" fill="#32c0f6"/><polygon points="37.6,48.8 44.4,49.0 49.4,46.8 44.1,46.2 37.9,46.8" fill="#2cb8f2"/><polygon points="38.5,63.0 43.2,64.6 43.2,70.5 39.1,69.0" fill="#2cc4f6"/><polygon points="66.1,45.9 78.2,45.2 86.4,51.8 89.0,61.5 88.8,70.5 84.5,76.0 76.8,78.6 68.2,77.2 62.5,71.8 60.2,63.0 60.5,53.4" fill="#2088d0"/><polygon points="61.8,58.4 67.4,63.0 68.0,69.0 72.1,70.5 75.2,75.5 69.2,75.2 63.0,70.2 60.8,63.0" fill="#24a0e6"/><polygon points="74.2,60.0 82.4,60.0 86.4,64.6 86.4,70.5 82.4,75.5 75.2,75.5 72.1,70.5 72.1,64.6" fill="#28a6f0"/><polygon points="67.0,55.2 73.2,53.4 78.2,56.9 74.2,60.0 72.1,64.6 67.4,63.0" fill="#34e0fc"/><polygon points="62.4,52.5 66.5,48.8 73.2,49.0 73.2,53.4 67.0,55.2 63.2,58.0" fill="#30d2f8"/><polygon points="78.2,56.9 82.4,55.9 85.5,59.6 82.4,60.0 74.2,60.0" fill="#32c0f6"/><polygon points="66.5,48.8 73.2,49.0 78.2,46.8 73.0,46.2 66.8,46.8" fill="#2cb8f2"/><polygon points="67.4,63.0 72.1,64.6 72.1,70.5 68.0,69.0" fill="#2cc4f6"/><rect x="41.6" y="46.0" width="13.1" height="6.0" fill="#e09818"/><rect x="69.8" y="46.0" width="13.8" height="6.0" fill="#e09818"/><rect x="60.8" y="24.5" width="5.0" height="12.5" fill="#e89c18"/><rect x="60.8" y="56.4" width="5.0" height="14.4" fill="#e89c18"/><ellipse cx="61.0" cy="44.2" rx="3.6" ry="4" fill="#fff" transform="rotate(35 61.0 44.2)"/></g><path d="M5 88V82M5 82.5L7.5 81.5" stroke="#999" stroke-width=".5" fill="none"/></svg></div>
<div class="abs lb" style="left:620px;top:406px">Polyhedra (Zeolite rho)</div>
<div class="abs th" style="left:44px;top:455px"><svg width="120" height="90" viewBox="0 0 120 90"><defs><filter id="m13f"><feGaussianBlur stdDeviation=".25"/></filter></defs><rect width="120" height="90" fill="#fff"/><g filter="url(#m13f)" fill="none" stroke-width=".55"><path d="M4.1 18.2L22.9 15.5M4.1 22.9L22.9 20.2M4.1 27.6L22.9 24.9M4.1 32.3L22.9 29.6M4.1 37.0L22.9 34.2M4.1 41.7L22.9 38.9M4.1 46.4L22.9 43.6M4.1 51.1L22.9 48.3M4.1 55.8L22.9 53.0M4.1 60.4L22.9 57.7M4.1 65.1L22.9 62.4M4.1 69.8L22.9 67.1M4.1 74.5L22.9 71.8M4.1 18.2L4.1 74.5M8.8 17.6L8.8 73.8M13.5 16.9L13.5 73.1M18.2 16.2L18.2 72.4M22.9 15.5L22.9 71.8" stroke="#cc4a5a" opacity=".8"/><path d="M22.9 15.5L41.6 19.2M22.9 20.2L41.6 23.9M22.9 24.9L41.6 28.6M22.9 29.6L41.6 33.3M22.9 34.2L41.6 38.0M22.9 38.9L41.6 42.7M22.9 43.6L41.6 47.4M22.9 48.3L41.6 52.1M22.9 53.0L41.6 56.8M22.9 57.7L41.6 61.4M22.9 62.4L41.6 66.1M22.9 67.1L41.6 70.8M22.9 71.8L41.6 75.5M27.6 16.4L27.6 72.7M32.2 17.4L32.2 73.6M36.9 18.3L36.9 74.6M41.6 19.2L41.6 75.5" stroke="#4c4cc0" opacity=".8"/><path d="M41.6 19.2L60.4 15.5M41.6 23.9L60.4 20.2M41.6 28.6L60.4 24.9M41.6 33.3L60.4 29.6M41.6 38.0L60.4 34.2M41.6 42.7L60.4 38.9M41.6 47.4L60.4 43.6M41.6 52.1L60.4 48.3M41.6 56.8L60.4 53.0M41.6 61.4L60.4 57.7M41.6 66.1L60.4 62.4M41.6 70.8L60.4 67.1M41.6 75.5L60.4 71.8M46.3 18.3L46.3 74.6M51.0 17.4L51.0 73.6M55.7 16.4L55.7 72.7M60.4 15.5L60.4 71.8" stroke="#cc4a5a" opacity=".8"/><path d="M60.4 15.5L78.5 19.2M60.4 20.2L78.5 23.9M60.4 24.9L78.5 28.6M60.4 29.6L78.5 33.3M60.4 34.2L78.5 38.0M60.4 38.9L78.5 42.7M60.4 43.6L78.5 47.4M60.4 48.3L78.5 52.1M60.4 53.0L78.5 56.8M60.4 57.7L78.5 61.4M60.4 62.4L78.5 66.1M60.4 67.1L78.5 70.8M60.4 71.8L78.5 75.5M64.9 16.4L64.9 72.7M69.4 17.4L69.4 73.6M74.0 18.3L74.0 74.6M78.5 19.2L78.5 75.5" stroke="#4c4cc0" opacity=".8"/><path d="M78.5 19.2L97.2 15.5M78.5 23.9L97.2 20.2M78.5 28.6L97.2 24.9M78.5 33.3L97.2 29.6M78.5 38.0L97.2 34.2M78.5 42.7L97.2 38.9M78.5 47.4L97.2 43.6M78.5 52.1L97.2 48.3M78.5 56.8L97.2 53.0M78.5 61.4L97.2 57.7M78.5 66.1L97.2 62.4M78.5 70.8L97.2 67.1M78.5 75.5L97.2 71.8M83.2 18.3L83.2 74.6M87.9 17.4L87.9 73.6M92.6 16.4L92.6 72.7M97.2 15.5L97.2 71.8" stroke="#cc4a5a" opacity=".8"/><path d="M97.2 15.5L116.0 19.2M97.2 20.2L116.0 23.9M97.2 24.9L116.0 28.6M97.2 29.6L116.0 33.3M97.2 34.2L116.0 38.0M97.2 38.9L116.0 42.7M97.2 43.6L116.0 47.4M97.2 48.3L116.0 52.1M97.2 53.0L116.0 56.8M97.2 57.7L116.0 61.4M97.2 62.4L116.0 66.1M97.2 67.1L116.0 70.8M97.2 71.8L116.0 75.5M101.9 16.4L101.9 72.7M106.6 17.4L106.6 73.6M111.3 18.3L111.3 74.6M116.0 19.2L116.0 75.5" stroke="#4c4cc0" opacity=".8"/><path d="M22.9 15.5L22.9 71.8" stroke="#8a8aa0" stroke-width=".7" opacity=".8"/><path d="M41.6 19.2L41.6 75.5" stroke="#70306a" stroke-width=".7" opacity=".8"/><path d="M60.4 15.5L60.4 71.8" stroke="#8a8aa0" stroke-width=".7" opacity=".8"/><path d="M78.5 19.2L78.5 75.5" stroke="#70306a" stroke-width=".7" opacity=".8"/><path d="M97.2 15.5L97.2 71.8" stroke="#8a8aa0" stroke-width=".7" opacity=".8"/></g></svg></div>
<div class="abs lb" style="left:1px;top:554px">Polysynthetic Twins</div>
<div class="abs th" style="left:250px;top:455px"><svg width="120" height="90" viewBox="0 0 120 90"><defs><radialGradient id="n14r" cx="40%" cy="35%" r="65%"><stop offset="0" stop-color="#ff6050"/><stop offset=".4" stop-color="#e01410"/><stop offset="1" stop-color="#900808"/></radialGradient><linearGradient id="n14p" x1="0" y1="0" x2="1" y2="0"><stop offset="0" stop-color="#d4d4cc"/><stop offset=".35" stop-color="#f8f8f4"/><stop offset=".75" stop-color="#e4e4dc"/><stop offset="1" stop-color="#b8b8b0"/></linearGradient><linearGradient id="n14q" x1="0" y1="0" x2="1" y2="0"><stop offset="0" stop-color="#d03030"/><stop offset=".35" stop-color="#f04040"/><stop offset=".75" stop-color="#e83838"/><stop offset="1" stop-color="#b02828"/></linearGradient><filter id="n14f"><feGaussianBlur stdDeviation=".35"/></filter></defs><rect width="120" height="90" fill="#ffffd6"/><g filter="url(#n14f)"><polygon points="48.5,-0.5 55.4,-0.5 55.4,5.5 47.5,4.5" fill="#6464c8"/><polygon points="46.6,73.9 51.6,70.1 55.8,74.5 55.8,84.5 46.6,83.2" fill="#5c5cbc"/><polygon points="46.6,77.0 51.6,70.1 53.5,78.2" fill="#7474d8"/><rect x="55.4" y="0" width="9.4" height="90" fill="url(#n14p)"/><rect x="55.4" y="0.0" width="9.4" height="3.9" fill="url(#n14q)"/><rect x="55.4" y="20.8" width="9.4" height="15.6" fill="url(#n14q)"/><rect x="55.4" y="53.2" width="9.4" height="15.6" fill="url(#n14q)"/><rect x="55.4" y="85.1" width="9.4" height="8.1" fill="url(#n14q)"/><path d="M51.6 11.8L44.1 3.0M51.6 11.8L62.2 6.8M51.6 11.8L47.2 16.0M51.6 11.8L51.9 20.1M40.8 24.9L33.8 19.9M40.8 24.9L33.8 29.5M40.8 24.9L47.2 16.0M40.8 24.9L47.2 33.5M51.6 38.0L51.9 28.9M51.6 38.0L47.2 33.5M51.6 38.0L43.2 46.6M69.5 51.4L80.0 46.6M69.5 51.4L69.8 59.9M69.5 51.4L62.2 47.0M77.0 64.9L83.5 56.1M77.0 64.9L69.8 59.9M77.0 64.9L69.8 69.2M77.0 64.9L83.5 73.2M69.8 78.0L65.6 73.0M69.8 78.0L80.0 82.6M69.8 78.0L61.6 86.0M69.8 78.0L69.8 69.2M43.9 82.6L51.0 90.1M80.4 3.0L66.0 0.8" stroke="#9696a0" stroke-width="1.4" fill="none"/><polygon points="65.4,3.9 79.5,8.5 71.0,19.8" fill="#7070d4"/><polygon points="65.4,3.9 71.0,19.8 64.8,12.0" fill="#5454b0"/><polygon points="70.8,20.8 83.8,16.8 83.8,33.5 70.1,29.8" fill="#5858b8"/><polygon points="70.8,20.8 83.8,16.8 72.5,28.5" fill="#7c7ce4"/><polygon points="67.5,32.4 79.5,42.2 62.6,46.6" fill="#5050b0"/><polygon points="67.5,32.4 72.2,34.5 62.6,46.6" fill="#6c6cd0"/><polygon points="44.8,43.2 62.5,47.0 51.9,59.8" fill="#6868d0"/><polygon points="44.8,43.2 51.9,59.8 48.5,53.2" fill="#5050b0"/><polygon points="34.1,59.5 47.5,56.8 47.5,73.5 34.1,69.1" fill="#5c5cc0"/><polygon points="34.1,59.5 47.5,56.8 37.2,67.0" fill="#7878e0"/><polygon points="65.4,84.2 78.8,86.5 77.2,93.2 65.4,93.2" fill="#6868d0"/><circle cx="51.6" cy="11.8" r="2" fill="#7684c4"/><circle cx="40.8" cy="24.9" r="2" fill="#7684c4"/><circle cx="51.6" cy="38.0" r="2" fill="#7684c4"/><circle cx="69.5" cy="51.4" r="2" fill="#7684c4"/><circle cx="77.0" cy="64.9" r="2" fill="#7684c4"/><circle cx="69.8" cy="78.0" r="2" fill="#7684c4"/><circle cx="44.1" cy="3.0" r="3.4" fill="url(#n14r)"/><circle cx="62.2" cy="6.8" r="3.4" fill="url(#n14r)"/><circle cx="80.4" cy="3.0" r="3.4" fill="url(#n14r)"/><circle cx="47.2" cy="16.0" r="3.4" fill="url(#n14r)"/><circle cx="51.9" cy="20.1" r="3.4" fill="url(#n14r)"/><circle cx="33.8" cy="19.9" r="3.4" fill="url(#n14r)"/><circle cx="33.8" cy="29.5" r="3.4" fill="url(#n14r)"/><circle cx="47.2" cy="33.5" r="3.4" fill="url(#n14r)"/><circle cx="51.9" cy="28.9" r="3.4" fill="url(#n14r)"/><circle cx="43.2" cy="46.6" r="3.4" fill="url(#n14r)"/><circle cx="80.0" cy="46.6" r="3.4" fill="url(#n14r)"/><circle cx="83.5" cy="56.1" r="3.4" fill="url(#n14r)"/><circle cx="69.8" cy="59.9" r="3.4" fill="url(#n14r)"/><circle cx="69.8" cy="69.2" r="3.4" fill="url(#n14r)"/><circle cx="65.6" cy="73.0" r="3.4" fill="url(#n14r)"/><circle cx="83.5" cy="73.2" r="3.4" fill="url(#n14r)"/><circle cx="43.9" cy="82.6" r="3.4" fill="url(#n14r)"/><circle cx="80.0" cy="82.6" r="3.4" fill="url(#n14r)"/><circle cx="61.6" cy="86.0" r="3.4" fill="url(#n14r)"/></g><path d="M108.5 10.2l2.3-3 2.3 3z" fill="#6868c8"/><circle cx="107.5" cy="2.6" r=".6" fill="#99b"/><circle cx="110.5" cy="4.5" r=".6" fill="#99b"/><circle cx="114.5" cy="4.5" r=".5" fill="#bbc"/><rect x="114" y="8" width="1.6" height=".7" fill="#99a"/></svg></div>
<div class="abs lb" style="left:207px;top:554px">Quartz Pole</div>
<div class="abs th" style="left:456px;top:455px"><svg width="120" height="90" viewBox="0 0 120 90"><defs><radialGradient id="o15b" cx="45%" cy="30%" r="65%"><stop offset="0" stop-color="#3060f0"/><stop offset=".4" stop-color="#1030b8"/><stop offset="1" stop-color="#081870"/></radialGradient><filter id="o15f"><feGaussianBlur stdDeviation=".35"/></filter></defs><rect width="120" height="90" fill="#90b8d1"/><g filter="url(#o15f)" stroke="#80307c" stroke-width=".4" stroke-linejoin="round"><polygon points="56.4,9.2 74.1,23.2 53.5,31.4" fill="#f880f0"/><polygon points="74.1,23.2 98.5,25.1 84.8,43.2" fill="#b452b4"/><polygon points="74.1,23.2 98.5,25.1 86.2,38.0" fill="#f884f2"/><polygon points="84.8,43.2 89.5,65.5 67.9,57.0" fill="#f880f0"/><polygon points="67.9,57.0 89.5,65.5 72.2,61.4" fill="#c060c0"/><polygon points="67.9,57.0 64.1,80.5 46.0,66.4" fill="#a03c9c"/><polygon points="46.0,66.4 64.1,80.5 52.5,67.2" fill="#c468c4"/><polygon points="46.0,66.4 67.9,57.0 52.5,67.2" fill="#e890e0"/><polygon points="36.0,46.4 46.0,66.4 21.6,64.5" fill="#a848a8"/><polygon points="30.4,24.2 53.5,31.4 36.0,46.4" fill="#a040a0"/><polygon points="30.4,24.2 43.2,27.6 36.2,44.8" fill="#f884f0"/><circle cx="57.9" cy="46.0" r="5.2" fill="url(#o15b)" stroke="none"/><circle cx="61.9" cy="42.9" r="5.5" fill="url(#o15b)" stroke="none"/></g><rect x="14.6" y="4.4" width="4" height="1.4" fill="#334" opacity=".7"/><ellipse cx="112.5" cy="4.8" rx="1.7" ry="1.4" fill="#0c2080"/><path d="M111.6 10.5l1.5-2.6 1.5 2.6z" fill="#f070e8"/></svg></div>
<div class="abs lb" style="left:413px;top:554px;letter-spacing:0.14px">Ring Distortion</div>
<div class="abs th" style="left:663px;top:455px"><svg width="120" height="90" viewBox="0 0 120 90"><defs><linearGradient id="p16g" x1="0" y1="0" x2="0" y2="1"><stop offset="0" stop-color="#b6d6fa"/><stop offset=".5" stop-color="#d8e8fc"/><stop offset=".85" stop-color="#fafcff"/><stop offset="1" stop-color="#fff"/></linearGradient><radialGradient id="p16m" cx="40%" cy="35%" r="65%"><stop offset="0" stop-color="#e080ff"/><stop offset=".4" stop-color="#a020d0"/><stop offset="1" stop-color="#500878"/></radialGradient><radialGradient id="p16k" cx="40%" cy="35%" r="65%"><stop offset="0" stop-color="#c8c8c8"/><stop offset=".35" stop-color="#585858"/><stop offset="1" stop-color="#1c1c1c"/></radialGradient><pattern id="p16pm" x="24.4" y="22.4" width="4.05" height="6.8" patternUnits="userSpaceOnUse"><rect width="4.05" height="6.8" fill="#5a0a88"/><circle cx="2" cy="1.7" r="2.1" fill="url(#p16m)"/><circle cx="0" cy="5.1" r="2.1" fill="url(#p16m)"/><circle cx="4.05" cy="5.1" r="2.1" fill="url(#p16m)"/></pattern><pattern id="p16pk" x="23.8" y="36.6" width="4.02" height="6.5" patternUnits="userSpaceOnUse"><rect width="4.02" height="6.5" fill="#202020"/><circle cx="2" cy="1.6" r="2.1" fill="url(#p16k)"/><circle cx="0" cy="4.9" r="2.1" fill="url(#p16k)"/><circle cx="4.02" cy="4.9" r="2.1" fill="url(#p16k)"/></pattern><filter id="p16f"><feGaussianBlur stdDeviation=".35"/></filter></defs><rect width="120" height="90" fill="url(#p16g)"/><g filter="url(#p16f)"><rect x="24.4" y="22.4" width="71.2" height="13.6" rx="2.2" fill="url(#p16pm)"/><rect x="23.8" y="36.6" width="72.4" height="26" rx="2.2" fill="url(#p16pk)"/></g></svg></div>
<div class="abs lb" style="left:620px;top:554px">Silicon Interface</div>
<div class="abs th" style="left:44px;top:603px"><svg width="120" height="90" viewBox="0 0 120 90"><defs><radialGradient id="q17y" cx="55%" cy="35%" r="75%"><stop offset="0" stop-color="#eeee38"/><stop offset=".5" stop-color="#d8d822"/><stop offset="1" stop-color="#98980c"/></radialGradient><filter id="q17f"><feGaussianBlur stdDeviation=".4"/></filter><filter id="q17g"><feGaussianBlur stdDeviation="1.2"/></filter></defs><rect width="120" height="90" fill="#000"/><g filter="url(#q17f)"><ellipse cx="60.4" cy="46.0" rx="51.5" ry="6.8" fill="#d81212"/><polygon points="9.1,46.0 21.0,53.5 46.0,56.0 76.0,53.5 106.0,49.5 112.2,46.8 109.1,62.0 104.8,70.1 94.8,77.0 90.4,89.5 29.8,89.5 26.0,80.1 14.8,75.1 12.6,67.0 16.6,59.5 14.8,51.4" fill="url(#q17y)"/><g filter="url(#q17g)"><polygon points="46.0,57.0 61.0,55.8 57.2,77.0 61.0,86.0 46.0,72.0" fill="#a8a80e"/><polygon points="14.8,62.0 26.0,67.0 33.5,86.0 26.0,79.5 13.5,72.0" fill="#b4b412"/><polygon points="96.0,55.8 108.5,52.0 106.0,69.5 93.5,77.0" fill="#b0b010"/><polygon points="63.5,62.0 83.5,57.0 86.0,72.0 71.0,78.2" fill="#ecec40"/><polygon points="21.0,55.8 43.5,58.2 38.5,67.0 24.8,64.5" fill="#e8e838"/></g><ellipse cx="59.8" cy="46.0" rx="17" ry="4.6" fill="#d4d420"/><polygon points="59.8,49.5 76.0,48.9 76.0,52.6 59.8,53.2" fill="#e02020"/><polygon points="45.4,38.2 61.0,37.2 61.0,41.0 45.4,42.0" fill="#d81818"/><g transform="translate(60.4 36) scale(1.07) translate(-60.4 -36)"><polygon points="50.0,2.2 64.1,9.5 52.2,13.2" fill="#3a8cd0"/><polygon points="50.0,2.2 52.2,13.2 51.0,9.5" fill="#2664a0"/><polygon points="66.0,9.5 80.4,6.4 78.5,20.8 71.0,19.5" fill="#c030c0"/><polygon points="66.0,9.5 71.0,19.5 69.8,13.2" fill="#8a1c90"/><polygon points="37.2,8.0 52.2,13.9 39.8,25.1" fill="#c030c0"/><polygon points="37.2,8.0 46.0,17.0 39.8,25.1" fill="#8a1c90"/><polygon points="52.2,13.9 68.5,10.8 62.2,27.6" fill="#3a8cd0"/><polygon points="61.0,13.2 68.5,10.8 62.2,27.6" fill="#2664a0"/><polygon points="46.0,20.8 57.2,23.9 52.2,30.8 44.8,30.1" fill="#c030c0"/><polygon points="20.4,25.5 39.1,25.8 29.8,38.2" fill="#3a8cd0"/><polygon points="20.4,25.5 29.8,29.5 29.8,38.2" fill="#2664a0"/><polygon points="80.4,21.4 98.5,20.8 88.5,34.5" fill="#3a8cd0"/><polygon points="88.5,25.8 98.5,20.8 88.5,34.5" fill="#2664a0"/><polygon points="60.4,28.9 72.2,30.8 74.1,39.5 61.0,42.0" fill="#c030c0"/><polygon points="60.4,28.9 66.0,34.5 61.0,42.0" fill="#e050d8"/><polygon points="32.2,38.2 44.1,32.0 44.8,43.2 37.2,44.5" fill="#2664a0"/><polygon points="17.2,40.1 28.5,39.5 42.2,47.0 37.2,53.9 24.8,52.6" fill="#c030c0"/><polygon points="28.5,39.5 42.2,47.0 37.2,53.9" fill="#e050d8"/><polygon points="17.2,40.1 24.8,52.6 21.0,52.0" fill="#8a1c90"/><polygon points="39.8,49.5 46.6,56.0 37.9,54.5" fill="#e01818"/><polygon points="44.8,47.6 59.8,43.9 58.5,55.1 49.8,55.8" fill="#3a8cd0"/><polygon points="53.5,45.8 59.8,43.9 58.5,55.1" fill="#2664a0"/><polygon points="76.0,35.8 87.2,35.8 102.2,43.2 96.0,52.0 88.5,50.8" fill="#c030c0"/><polygon points="87.2,35.8 102.2,43.2 91.0,47.0" fill="#e050d8"/><polygon points="76.0,35.8 87.2,35.8 86.0,42.0 77.2,40.8" fill="#8a1c90"/><polygon points="74.8,42.6 89.1,47.6 87.2,52.0 76.0,52.0" fill="#3a8cd0"/><polygon points="74.8,42.6 81.0,47.0 76.0,52.0" fill="#50a8e0"/><circle cx="50.0" cy="2.2" r="1" fill="#e83030"/><circle cx="37.2" cy="8.0" r="1" fill="#e83030"/><circle cx="80.4" cy="6.4" r="1" fill="#e83030"/><circle cx="66.0" cy="9.5" r="1" fill="#e83030"/><circle cx="52.2" cy="13.9" r="1" fill="#e83030"/><circle cx="20.4" cy="25.5" r="1" fill="#e83030"/><circle cx="39.1" cy="25.8" r="1" fill="#e83030"/><circle cx="98.5" cy="20.8" r="1" fill="#e83030"/><circle cx="80.4" cy="21.4" r="1" fill="#e83030"/><circle cx="60.4" cy="28.9" r="1" fill="#e83030"/><circle cx="72.2" cy="30.8" r="1" fill="#e83030"/><circle cx="46.0" cy="30.8" r="1" fill="#e83030"/><circle cx="17.2" cy="40.1" r="1" fill="#e83030"/><circle cx="28.5" cy="39.5" r="1" fill="#e83030"/><circle cx="71.0" cy="19.5" r="1" fill="#e83030"/><circle cx="88.5" cy="34.5" r="1" fill="#e83030"/><circle cx="74.1" cy="39.5" r="1" fill="#e83030"/></g></g></svg></div>
<div class="abs th" style="left:250px;top:603px"><svg width="120" height="90" viewBox="0 0 120 90"><defs><linearGradient id="r18g" x1="0" y1="0" x2="0" y2="1"><stop offset="0" stop-color="#bedbfa"/><stop offset=".5" stop-color="#dceafc"/><stop offset=".9" stop-color="#fff"/></linearGradient><filter id="r18f"><feGaussianBlur stdDeviation=".35"/></filter></defs><rect width="120" height="90" fill="url(#r18g)"/><g filter="url(#r18f)"><polygon points="36.0,47.0 40.0,66.4 30.4,65.1" fill="#f0b020" stroke="#f0b020" stroke-width=".7" stroke-linejoin="round"/><polygon points="61.0,20.8 76.0,13.0 79.5,23.5" fill="#1cb8b0" stroke="#1cb8b0" stroke-width=".7" stroke-linejoin="round"/><polygon points="29.8,16.8 58.2,20.5 42.9,28.2 36.2,45.1" fill="#f01414" stroke="#f01414" stroke-width=".7" stroke-linejoin="round"/><polygon points="43.5,28.5 59.8,21.4 66.0,50.5" fill="#1cb8b0" stroke="#1cb8b0" stroke-width=".7" stroke-linejoin="round"/><polygon points="60.4,21.4 89.8,25.8 66.6,50.1" fill="#f01414" stroke="#f01414" stroke-width=".7" stroke-linejoin="round"/><polygon points="89.8,26.0 82.5,43.5 67.5,50.4" fill="#0a0af0" stroke="#0a0af0" stroke-width=".7" stroke-linejoin="round"/><polygon points="42.9,30.1 65.4,50.1 36.6,46.4" fill="#f8b81c" stroke="#f8b81c" stroke-width=".7" stroke-linejoin="round"/><polygon points="36.2,47.0 65.4,51.0 42.9,76.0" fill="#f01414" stroke="#f01414" stroke-width=".7" stroke-linejoin="round"/><polygon points="43.5,76.4 65.4,52.0 61.6,68.5" fill="#0a0af0" stroke="#0a0af0" stroke-width=".7" stroke-linejoin="round"/><polygon points="66.0,52.0 89.8,72.6 61.6,68.5" fill="#f8b81c" stroke="#f8b81c" stroke-width=".7" stroke-linejoin="round"/><polygon points="67.9,50.5 82.5,43.9 89.8,72.0" fill="#1cb8b0" stroke="#1cb8b0" stroke-width=".7" stroke-linejoin="round"/><path d="M29.5 16.4L76.6 12.6" stroke="#111" stroke-width="0.8"/><path d="M76.6 12.6L90.0 25.5" stroke="#111" stroke-width="0.8"/><path d="M29.5 16.4L42.5 28.0" stroke="#111" stroke-width="0.8"/><path d="M42.5 28.0L90.0 25.5" stroke="#111" stroke-width="0.8"/><path d="M42.5 28.0L42.9 76.4" stroke="#111" stroke-width="0.8"/><path d="M90.0 25.5L90.4 73.0" stroke="#111" stroke-width="0.8"/><path d="M42.9 76.4L90.4 73.0" stroke="#111" stroke-width="0.8"/><path d="M29.5 16.4L29.8 65.1" stroke="#111" stroke-width="0.8"/><path d="M29.8 65.1L42.9 76.4" stroke="#111" stroke-width="0.8"/></g><rect x="3.2" y="3.6" width="17.8" height="1.3" fill="#222" opacity=".7"/><rect x="3.2" y="6.4" width="22" height="1.3" fill="#222" opacity=".7"/></svg></div>
<div class="abs th" style="left:456px;top:603px"><svg width="120" height="90" viewBox="0 0 120 90"><defs><radialGradient id="s19r" cx="35%" cy="35%" r="65%"><stop offset="0" stop-color="#ff7060"/><stop offset=".4" stop-color="#e01010"/><stop offset="1" stop-color="#700808"/></radialGradient><radialGradient id="s19b" cx="35%" cy="35%" r="65%"><stop offset="0" stop-color="#5050ff"/><stop offset=".4" stop-color="#1010c8"/><stop offset="1" stop-color="#080860"/></radialGradient><clipPath id="s19c"><path d="M0 0H120V90z"/></clipPath><filter id="s19f"><feGaussianBlur stdDeviation=".35"/></filter></defs><rect width="120" height="90" fill="#fff"/><g filter="url(#s19f)"><polygon points="54.8,2.0 59.1,5.1 54.8,11.4" fill="#0808e8"/><polygon points="62.9,-0.5 74.5,21.5 48.9,20.5" fill="#ff0808"/><polygon points="77.2,18.9 106.0,21.4 91.6,38.5 83.5,28.9" fill="#0808e8"/><polygon points="76.0,22.6 83.5,28.2 91.6,38.5 87.9,45.5 82.2,34.5" fill="#c81010"/><polygon points="87.9,45.1 94.4,67.9 69.8,58.2" fill="#0808e8"/><polygon points="92.5,58.2 99.5,71.0 73.5,67.2 76.0,63.0 94.4,67.9" fill="#ff0808"/><polygon points="46.0,68.9 67.5,61.8 68.2,69.5 64.5,86.0 51.0,86.0" fill="#0808e8"/><polygon points="49.8,73.2 71.0,69.2 64.1,77.0 61.0,86.0 54.8,86.0" fill="#c81010"/><polygon points="57.2,77.0 66.0,75.8 64.5,86.0 58.5,86.0" fill="#0606b0"/><polygon points="32.2,45.8 43.8,67.2 18.2,66.0" fill="#c81010"/><polygon points="27.2,52.0 32.2,45.8 38.5,57.0 33.5,59.5" fill="#0606b0"/><polygon points="14.5,68.5 43.8,70.0 42.5,67.0 18.5,65.8" fill="#0808e8"/><polygon points="21.0,18.9 48.2,20.2 35.0,22.0 33.5,33.5 28.2,33.5" fill="#ff0808"/><polygon points="36.0,20.8 48.2,20.2 45.4,25.5" fill="#c81010"/><polygon points="36.6,23.2 51.2,30.2 32.2,45.5 27.9,34.5" fill="#0808e8"/><polygon points="52.9,21.4 68.2,22.0 52.2,29.2" fill="#0808e8"/><circle cx="59.8" cy="44.5" r="8.2" fill="url(#s19b)"/><path d="M63.2 51.9 A8.2 8.2 0 0 1 56.2 37.1 Q63.8 43.5 63.2 51.9z" fill="url(#s19r)"/></g></svg></div>
<div class="abs th" style="left:663px;top:603px"><svg width="120" height="90" viewBox="0 0 120 90"><defs><linearGradient id="t20g" x1="0" y1="0" x2="0" y2="1"><stop offset="0" stop-color="#b8d8fa"/><stop offset=".5" stop-color="#dceafc"/><stop offset=".9" stop-color="#fff"/></linearGradient><radialGradient id="t20p" cx="38%" cy="32%" r="68%"><stop offset="0" stop-color="#f8b0f8"/><stop offset=".12" stop-color="#d050d0"/><stop offset=".45" stop-color="#a01ca0"/><stop offset="1" stop-color="#5a0a60"/></radialGradient><radialGradient id="t20m" cx="38%" cy="32%" r="68%"><stop offset="0" stop-color="#a8c0b0"/><stop offset=".5" stop-color="#7aa890"/><stop offset="1" stop-color="#6c9880"/></radialGradient><filter id="t20f"><feGaussianBlur stdDeviation=".35"/></filter></defs><rect width="120" height="90" fill="url(#t20g)"/><g filter="url(#t20f)"><circle cx="38.8" cy="10.1" r="7.8" fill="url(#t20p)" opacity="1"/><circle cx="92.2" cy="13.0" r="7.8" fill="url(#t20p)" opacity="1"/><circle cx="94.8" cy="66.8" r="7.8" fill="url(#t20p)" opacity="1"/><circle cx="59.8" cy="17.0" r="7.8" fill="url(#t20p)" opacity="1"/><circle cx="88.5" cy="45.8" r="7.8" fill="url(#t20p)" opacity="1"/><circle cx="25.5" cy="43.9" r="3.0" fill="url(#t20p)" opacity="1"/><circle cx="60.4" cy="78.9" r="4.0" fill="url(#t20p)" opacity="1"/><polygon points="27.2,23.6 34.1,12.6 92.2,13.2 80.8,23.6" fill="#98d2b2" opacity=".9"/><polygon points="80.8,23.6 92.2,13.2 92.9,67.0 80.8,77.0" fill="#8cc8a6" opacity=".8"/><polygon points="27.2,23.6 80.8,23.6 80.8,77.0 27.2,77.0" fill="#88caa2" opacity=".93"/><circle cx="36.0" cy="43.9" r="7.0" fill="url(#t20m)" opacity="0.9"/><circle cx="66.0" cy="38.9" r="7.0" fill="url(#t20m)" opacity="0.9"/><circle cx="42.2" cy="62.6" r="7.0" fill="url(#t20m)" opacity="0.9"/><circle cx="60.4" cy="70.8" r="7.0" fill="url(#t20m)" opacity="0.9"/><path d="M27.2 23.6H80.8V77.0" stroke="#607868" stroke-width=".5" fill="none"/><path d="M27.2 23.6V77.0" stroke="#80a090" stroke-width=".4" fill="none"/><clipPath id="t20c1"><rect x="0" y="0" width="120" height="17.6"/></clipPath><g clip-path="url(#t20c1)"><circle cx="59.8" cy="17.0" r="7.8" fill="url(#t20p)" opacity="1"/></g><clipPath id="t20c2"><rect x="85.0" y="0" width="60" height="90"/></clipPath><g clip-path="url(#t20c2)"><circle cx="88.5" cy="45.8" r="7.8" fill="url(#t20p)" opacity="1"/></g><circle cx="53.8" cy="50.5" r="7.8" fill="url(#t20p)" opacity="1"/><circle cx="27.0" cy="22.9" r="8.0" fill="url(#t20p)" opacity="1"/><circle cx="80.1" cy="24.8" r="8.0" fill="url(#t20p)" opacity="1"/><circle cx="27.6" cy="76.1" r="8.0" fill="url(#t20p)" opacity="1"/><circle cx="81.0" cy="78.0" r="8.0" fill="url(#t20p)" opacity="1"/></g></svg></div>
  </div>
  <div id="bot" class="abs">
    <div class="abs" style="left:11px;top:11px;width:14px;height:13px;background:#fff;border:1px solid #444"></div><svg class="abs" style="left:11px;top:11px" width="14" height="13" viewBox="0 0 14 13"><path d="M2.8 6.6L5.4 9.4L10.8 3" stroke="#111" stroke-width="1.5" fill="none"/></svg><div class="abs" style="left:30px;top:9px;font-size:13px;line-height:16px;color:#000;white-space:nowrap">Show at startup</div>
    <div class="abs btn" style="left:473px;width:116px">Show Library</div>
    <div class="abs btn" style="left:599px;width:131px">New Document</div>
    <div class="abs btn" style="left:742px;width:132px;color:#8c9096;background:#efefef;border-color:#c2c2c2">Open&nbsp; Selection</div>
    <div class="abs btn" style="left:884px;width:118px">Open Other...</div>
  </div>
</div>
<svg class="abs" style="left:708px;top:706px" width="292" height="40" viewBox="708 706 292 40"><g opacity=".56"><g fill="#676767"><ellipse cx="726" cy="720.8" rx="13.3" ry="10.6"/><path d="M716.5 727.5L715.2 734L722.5 730.2z"/></g><g fill="#fff" opacity=".9"><circle cx="720.6" cy="718.6" r="1.9"/><circle cx="730" cy="718" r="1.9"/></g><g fill="#676767" stroke="#f2f2f2" stroke-width="1.2"><ellipse cx="738.6" cy="731" rx="10.8" ry="8.9"/></g><path d="M744 738L747.2 741.6L746.5 736.5z" fill="#676767"/><g fill="#fff" opacity=".9"><circle cx="734.7" cy="729" r="1.5"/><circle cx="742.4" cy="729" r="1.5"/></g><g stroke="#676767" stroke-width="2.3" fill="none" stroke-linecap="butt" stroke-linejoin="miter"><g transform="translate(761 713)"><path d="M10 1Q8 7 1 13M16 1Q19 8 26 12M12 12Q9 19 4 23L21 21.5M18 15.5Q21 20 23.5 25"/></g><g transform="translate(791.5 713)"><path d="M13 0Q10 7 1 11M13 1Q17 8 26 11M7 11V15Q6 21 0 25.5M7 16Q9 21 13 24M19.5 11V15Q18 21 12.5 25.5M19.5 16Q22 22 26.5 25"/></g><g transform="translate(822 713)"><path d="M6 1.5H20V9H6zM0 13H26M9 13L7 18H20Q20 25 18 25.5L13 25"/></g><g transform="translate(880 713)"><path d="M6.5 0V10M6.5 4.5H12M2 3.5V10M0 10.5L12.5 9.5M16 0V8.5Q16 9.5 18 9.5H25M24 2L16 5.5M13.5 10.5L6 15.5L15 15M17 12.5L6 20L21 19M13 19.5V26.5M7 21.5L2 25.5M19 21.5L24 25.5"/></g><g transform="translate(907.5 713)"><path d="M0 4H26M8 0.5V7M18 0.5V7M4 8.5H22V12.5H4zM10 8.5V12.5M16 8.5V12.5M6 15.5H19M12.5 13V18.5M1 18.5H25M21 14L4 24.5M9 20.5H20V26.5H9zM9 23.5H20"/></g><g transform="translate(937.5 713)"><path d="M6 0Q4 5 0 9M5 5.5H10M6 9V24L10 21M11 4H26M15 0.5V7M22 0.5V7M13 8.5H24V15.5H13zM13 12H24M10 18.5H27M18.5 15.5V18.5Q17 23 10.5 26.5M18.5 18.5Q21 23 26.5 26"/></g><g transform="translate(965.8 713)"><path d="M6 0Q4 5 0 9M5 5.5H10M6 9V24L10 21M11 4H26M15 0.5V7M22 0.5V7M13 8.5H24V15.5H13zM13 12H24M10 18.5H27M18.5 15.5V18.5Q17 23 10.5 26.5M18.5 18.5Q21 23 26.5 26"/></g></g><circle cx="860.2" cy="727.4" r="2.1" fill="#676767"/></g></svg>
</body>
</html>
